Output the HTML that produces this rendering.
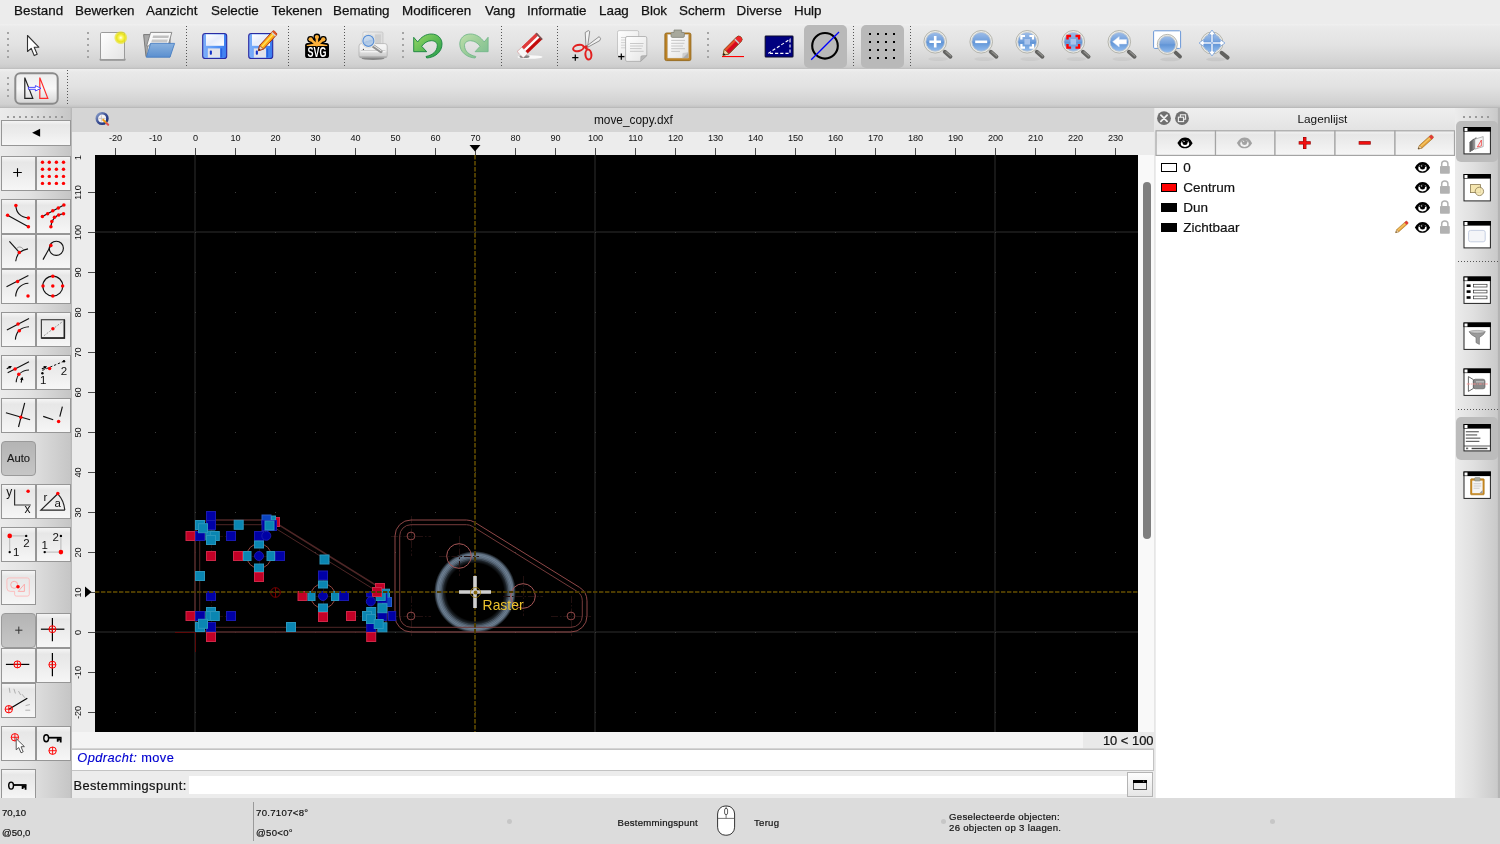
<!DOCTYPE html>
<html><head><meta charset="utf-8"><title>QCAD</title>
<style>
*{box-sizing:border-box;margin:0;padding:0}
html,body{width:1500px;height:844px;overflow:hidden;background:#dcdcdc;font-family:"Liberation Sans",sans-serif;color:#111}
.abs{position:absolute}
#menubar{position:absolute;left:0;top:0;width:1500px;height:24px;background:#ececec}
#menubar span{position:absolute;top:2.7px;font-size:13.4px;line-height:16px;color:#111;white-space:nowrap;-webkit-text-stroke:0.25px #111}
#tb1{position:absolute;left:0;top:24px;width:1500px;height:45px;background:linear-gradient(#f0f0f0 0%,#eaeaea 6%,#e3e3e3 45%,#d2d2d2 88%,#cbcbcb 96%,#bcbcbc 100%)}
#tb2{position:absolute;left:0;top:69px;width:1500px;height:39px;background:linear-gradient(#f0f0f0 0%,#e9e9e9 8%,#e2e2e2 45%,#d0d0d0 90%,#c6c6c6 96%,#b4b4b4 100%)}
.vdots{position:absolute;width:2px;background:repeating-linear-gradient(#a4a4a4 0 2px,transparent 2px 6px)}
.vsep{position:absolute;width:1px;background:repeating-linear-gradient(#555 0 1px,transparent 1px 3px)}
.hsep{position:absolute;height:1px;background:repeating-linear-gradient(90deg,#555 0 1px,transparent 1px 3px)}
.hdots{position:absolute;height:2px;background:repeating-linear-gradient(90deg,#9a9a9a 0 2px,transparent 2px 6px)}
.pressed{position:absolute;background:#b9b9b9;border-radius:5px}
#left{position:absolute;left:0;top:108px;width:72px;height:690px;background:linear-gradient(90deg,#ebebeb 0%,#e2e2e2 40%,#c6c6c6 97%,#b4b4b4 100%)}
.lb{position:absolute;width:35px;height:35px;border:1px solid #969696;background:linear-gradient(#f5f5f5 0%,#e7e7e7 16%,#ececec 50%,#f6f6f6 100%)}
.lb svg{position:absolute;left:0;top:0}
.lbp{position:absolute;width:35px;height:35px;border:1px solid #9a9a9a;border-radius:4px;background:linear-gradient(#b4b4b4,#c6c6c6)}
#mdi{position:absolute;left:72px;top:108px;width:1082px;height:690px;background:#ececec}
#mditab{position:absolute;left:0;top:0;width:1082px;height:24px;background:#d5d5d5;z-index:2}
#canvas{position:absolute;left:23px;top:47px;width:1043px;height:577px;background:#000;overflow:hidden}
.rl{position:absolute;font-size:9.4px;line-height:10px;color:#111;white-space:nowrap}
#status{position:absolute;left:0;top:798px;width:1500px;height:46px;background:#dcdcdc;font-size:9.6px;color:#111}
#status span{position:absolute;white-space:nowrap;line-height:11px;-webkit-text-stroke:0.18px #111}
#dock{position:absolute;left:1154px;top:108px;width:301px;height:690px;background:#ececec}
#right{position:absolute;left:1455px;top:108px;width:45px;height:690px;background:linear-gradient(90deg,#ececec 0%,#e0e0e0 40%,#cacaca 93%,#b8b8b8 100%)}

#root{position:absolute;left:0;top:0;width:1500px;height:844px;will-change:transform}

</style></head>
<body>
<div id="root">
<!-- menubar.html -->
<div id="menubar">
<span style="left:14px">Bestand</span>
<span style="left:75px">Bewerken</span>
<span style="left:146px">Aanzicht</span>
<span style="left:211px">Selectie</span>
<span style="left:271.5px">Tekenen</span>
<span style="left:333px">Bemating</span>
<span style="left:402px">Modificeren</span>
<span style="left:485px">Vang</span>
<span style="left:527px">Informatie</span>
<span style="left:599px">Laag</span>
<span style="left:641px">Blok</span>
<span style="left:679px">Scherm</span>
<span style="left:736.5px">Diverse</span>
<span style="left:794px">Hulp</span>
</div>

<!-- toolbar.html -->
<div id="tb1"></div>
<div id="tb2"></div>
<!-- handles and separators -->
<div class="vdots" style="left:7px;top:32px;height:26px"></div>
<div class="vdots" style="left:87px;top:32px;height:26px"></div>
<div class="vdots" style="left:402px;top:32px;height:26px"></div>
<div class="vdots" style="left:707px;top:32px;height:26px"></div>
<div class="vdots" style="left:7px;top:77px;height:20px"></div>
<div class="vsep" style="left:186px;top:26px;height:40px"></div>
<div class="vsep" style="left:288px;top:26px;height:40px"></div>
<div class="vsep" style="left:344px;top:26px;height:40px"></div>
<div class="vsep" style="left:501px;top:26px;height:40px"></div>
<div class="vsep" style="left:557px;top:26px;height:40px"></div>
<div class="vsep" style="left:853px;top:26px;height:40px"></div>
<div class="vsep" style="left:910px;top:26px;height:40px"></div>
<div class="vsep" style="left:67px;top:70px;height:36px"></div>
<div class="pressed" style="left:804px;top:25px;width:43px;height:43px"></div>
<div class="pressed" style="left:861px;top:25px;width:43px;height:43px"></div>
<svg class="abs" style="left:0;top:24px" width="1500" height="84" viewBox="0 24 1500 84">
<defs>
<linearGradient id="gPaper" x1="0" y1="0" x2="1" y2="1"><stop offset="0" stop-color="#ffffff"/><stop offset="1" stop-color="#e4e4e4"/></linearGradient>
<radialGradient id="gGlow"><stop offset="0" stop-color="#ffffff"/><stop offset="0.25" stop-color="#fdf86a"/><stop offset="0.6" stop-color="#e9e31c"/><stop offset="0.85" stop-color="#e9e31c" stop-opacity="0.6"/><stop offset="1" stop-color="#e9e31c" stop-opacity="0"/></radialGradient>
<linearGradient id="gFolder" x1="0" y1="0" x2="0" y2="1"><stop offset="0" stop-color="#8ab2df"/><stop offset="1" stop-color="#5a8fcf"/></linearGradient>
<linearGradient id="gFloppy" x1="0" y1="0" x2="1" y2="0"><stop offset="0" stop-color="#7fb0fa"/><stop offset="0.5" stop-color="#5a98f6"/><stop offset="1" stop-color="#3a7cf0"/></linearGradient>
<linearGradient id="gLabel" x1="0" y1="0" x2="1" y2="1"><stop offset="0" stop-color="#ffffff"/><stop offset="0.5" stop-color="#e6ecfb"/><stop offset="1" stop-color="#ffffff"/></linearGradient>
<linearGradient id="gUndo" x1="0" y1="0" x2="1" y2="1"><stop offset="0" stop-color="#9ad866"/><stop offset="0.5" stop-color="#5dbb55"/><stop offset="1" stop-color="#249a4c"/></linearGradient>
<linearGradient id="gRedo" x1="1" y1="0" x2="0" y2="1"><stop offset="0" stop-color="#bfe0ac"/><stop offset="0.5" stop-color="#9acc98"/><stop offset="1" stop-color="#78bc90"/></linearGradient>
<linearGradient id="gLens" x1="0" y1="0" x2="0" y2="1"><stop offset="0" stop-color="#9dbde8"/><stop offset="0.48" stop-color="#6f9edb"/><stop offset="0.52" stop-color="#6094d6"/><stop offset="1" stop-color="#92bcee"/></linearGradient>
<linearGradient id="gPrinter" x1="0" y1="0" x2="0" y2="1"><stop offset="0" stop-color="#f8f8f8"/><stop offset="0.55" stop-color="#ededed"/><stop offset="0.6" stop-color="#e0e0e0"/><stop offset="1" stop-color="#c6c6c6"/></linearGradient>
<linearGradient id="gTB" x1="0" y1="0" x2="0" y2="1"><stop offset="0" stop-color="#ececec"/><stop offset="0.5" stop-color="#f8f8f8"/><stop offset="1" stop-color="#d4d4d4"/></linearGradient>
<linearGradient id="gPP" x1="0" y1="0" x2="1" y2="0"><stop offset="0" stop-color="#f2f2f2"/><stop offset="1" stop-color="#dcdcdc"/></linearGradient>
<linearGradient id="gPL" x1="0" y1="0" x2="0.3" y2="1"><stop offset="0" stop-color="#d6e4f2"/><stop offset="0.55" stop-color="#bfd3ea"/><stop offset="0.6" stop-color="#a9c4e4"/><stop offset="1" stop-color="#b9d0ea"/></linearGradient>
<g id="mag">
  <ellipse cx="3" cy="17.2" rx="10" ry="2" fill="#000" opacity="0.045"/>
  <line x1="9.6" y1="10" x2="15.2" y2="14.9" stroke="#626260" stroke-width="4" stroke-linecap="round"/>
  <line x1="10.6" y1="10" x2="15.6" y2="14.2" stroke="#8e8e8a" stroke-width="1.2" stroke-linecap="round"/>
  <circle cx="0" cy="0" r="11.3" fill="#ecece6" stroke="#aeaea6" stroke-width="0.9"/>
  <circle cx="0" cy="0" r="9.4" fill="url(#gLens)" stroke="#b9c3cf" stroke-width="0.8"/>
</g>
</defs>
<!-- pointer -->
<path d="M27.5,35.5 L27.5,51.5 L31.2,48.3 L34.2,55.6 L37.2,54.3 L34.2,47.2 L38.8,47.2 Z" fill="#fff" stroke="#333" stroke-width="1.1" stroke-linejoin="round"/>
<!-- new -->
<rect x="99.6" y="58.3" width="26" height="2.4" rx="1.2" fill="#000" opacity="0.32"/>
<rect x="100.5" y="32.5" width="24" height="27" rx="1.3" fill="url(#gPaper)" stroke="#9b9b9b" stroke-width="1"/>
<circle cx="120.8" cy="37.7" r="6.9" fill="url(#gGlow)"/>
<!-- open -->
<path d="M143.6,34.6 H151.5 L153,36.5 H170 V56.6 H146 Z" fill="#a9a9a9" stroke="#707070" stroke-width="0.9"/>
<path d="M150.6,32.4 H171.8 L168,46 H146.6 Z" fill="#f8f8f8" stroke="#808080" stroke-width="0.9"/>
<path d="M153.2,35.5 H169 L168.3,38 H152.5 Z" fill="#c0c0c0"/>
<path d="M152,39.5 H167.8 L167,42.5 H151.2 Z" fill="#c8c8c8"/>
<path d="M146.8,56.2 L147.6,47 L150.6,43.6 L149.6,51 Z" fill="#e8e8e8" stroke="#707070" stroke-width="0.6"/>
<path d="M150.6,43.4 H174.6 L170,57.2 H146.4 Z" fill="url(#gFolder)" stroke="#4a80c4" stroke-width="0.9" stroke-linejoin="round"/>
<!-- save -->
<g id="floppy">
<rect x="202.7" y="33.5" width="24" height="25" rx="2.6" fill="url(#gFloppy)" stroke="#2a2aa2" stroke-width="1.1"/>
<rect x="206" y="34.4" width="18" height="11.4" fill="url(#gLabel)"/>
<rect x="207.8" y="48.4" width="12.2" height="9.2" fill="#e2e2ea"/>
<rect x="209.8" y="50.6" width="2.1" height="4.2" rx="0.8" fill="#1432c8"/>
<rect x="220.6" y="48.4" width="1.6" height="9" fill="#2a62e0"/>
</g>
<use href="#floppy" x="46"/>
<!-- save-as pencil -->
<g transform="translate(258.5,50.6) rotate(-47.5)">
<path d="M0,0 L4.6,-2.7 H23.5 Q25,-2.7 25,-1.2 V1.2 Q25,2.7 23.5,2.7 H4.6 Z" fill="#ffa914" stroke="#a02c12" stroke-width="0.9" stroke-linejoin="round"/>
<path d="M4.6,-1 H22 V0.6 H4.6 Z" fill="#ffe05a"/>
<path d="M0,0 L4.6,-2.7 V2.7 Z" fill="#f2d6b0" stroke="#a02c12" stroke-width="0.7"/>
<path d="M0,0 L1.8,-1 V1 Z" fill="#222"/>
<rect x="21.6" y="-2.6" width="1.6" height="5.2" fill="#d0d0d0"/>
<path d="M23.2,-2.7 H23.6 Q25,-2.7 25,-1.2 V1.2 Q25,2.7 23.6,2.7 H23.2 Z" fill="#e0532a"/>
</g>
<!-- SVG logo -->
<g>
<rect x="305.1" y="42.9" width="23.9" height="15.1" rx="2.6" fill="#000"/>
<g stroke="#000" stroke-width="5.4" stroke-linecap="round"><line x1="316.9" y1="45" x2="316.9" y2="37"/><line x1="316.9" y1="45" x2="310.6" y2="39.3"/><line x1="316.9" y1="45" x2="323.3" y2="39.3"/></g>
<circle cx="316.9" cy="37" r="3.4" fill="#000"/><circle cx="310.6" cy="39.3" r="3.4" fill="#000"/><circle cx="323.3" cy="39.3" r="3.4" fill="#000"/>
<path d="M306.8,46.1 H327.3 V45 Q322,43.6 316.9,43.4 Q312,43.6 306.8,45 Z" fill="#fbb03b"/>
<g stroke="#fbb03b" stroke-width="2.5" stroke-linecap="round"><line x1="316.9" y1="45" x2="316.9" y2="37"/><line x1="316.9" y1="45" x2="310.6" y2="39.3"/><line x1="316.9" y1="45" x2="323.3" y2="39.3"/></g>
<circle cx="316.9" cy="37" r="2.1" fill="#fbb03b"/><circle cx="310.6" cy="39.3" r="2.1" fill="#fbb03b"/><circle cx="323.3" cy="39.3" r="2.1" fill="#fbb03b"/>
<text x="307.6" y="57.1" font-family="Liberation Sans, sans-serif" font-weight="bold" font-size="14" textLength="18.9" lengthAdjust="spacingAndGlyphs" fill="#fff">SVG</text>
</g>
<!-- print preview -->
<g>
<ellipse cx="373" cy="58.3" rx="11.5" ry="1.7" fill="#000" opacity="0.38"/>
<rect x="363" y="32" width="20" height="14" rx="1.2" fill="url(#gPP)" stroke="#c2c2c2" stroke-width="0.7"/>
<rect x="374.8" y="34.4" width="6.2" height="9.6" fill="#cfcfcf"/>
<path d="M361.4,43.6 H384.8 Q387.2,43.6 387.2,46 V55.6 Q387.2,57.6 385.2,57.6 H361 Q359,57.6 359,55.6 V46 Q359,43.6 361.4,43.6 Z" fill="url(#gPrinter)" stroke="#b0b0b0" stroke-width="0.8"/>
<rect x="360.8" y="50.3" width="24.6" height="1" fill="#c4c4c4"/>
<rect x="360.8" y="51.3" width="24.6" height="0.9" fill="#fff" opacity="0.9"/>
<rect x="359.6" y="56.4" width="27" height="1.2" rx="0.6" fill="#8e8e8e" opacity="0.7"/>
<line x1="373.2" y1="46" x2="380.9" y2="51.4" stroke="#909090" stroke-width="3.4" stroke-linecap="round"/>
<line x1="373.8" y1="45.6" x2="381" y2="50.6" stroke="#e8e8e8" stroke-width="1.1" stroke-linecap="round"/>
<circle cx="368.4" cy="40.9" r="7" fill="#f4f4f0" stroke="#cfcfca" stroke-width="0.6"/>
<circle cx="368.4" cy="40.9" r="5.5" fill="url(#gPL)" stroke="#5c90d6" stroke-width="1.2"/>
<circle cx="363.4" cy="49.4" r="0.6" fill="#444"/>
</g>
<!-- undo -->
<path id="undo" d="M413.7,37.3 L417.7,42 C421,37 426,34 431.3,34 C438,34 442,38.5 442,44 C442,52 435,57.5 426.7,58 L426,56.5 C433,55 437.3,51 437.3,45.3 C437.3,42.5 434.5,40.7 431.3,40.7 C427.5,40.7 424,43 421.7,46.3 L426.7,51.7 L413.7,51.7 Z" fill="url(#gUndo)" stroke="#178340" stroke-width="0.9" stroke-linejoin="round"/>
<g transform="translate(901.8,0) scale(-1,1)"><path d="M413.7,37.3 L417.7,42 C421,37 426,34 431.3,34 C438,34 442,38.5 442,44 C442,52 435,57.5 426.7,58 L426,56.5 C433,55 437.3,51 437.3,45.3 C437.3,42.5 434.5,40.7 431.3,40.7 C427.5,40.7 424,43 421.7,46.3 L426.7,51.7 L413.7,51.7 Z" fill="url(#gRedo)" stroke="#74b88a" stroke-width="0.9" stroke-linejoin="round"/></g>
<!-- eraser -->
<g>
<ellipse cx="530" cy="57" rx="12.5" ry="1.7" fill="#fff" opacity="0.85"/>
<ellipse cx="524.5" cy="56.6" rx="5" ry="1.5" fill="#555" opacity="0.7"/>
<g transform="translate(517.2,51.6) rotate(-44)">
<rect x="0" y="0" width="27" height="8.6" fill="#c40a0a"/>
<rect x="0" y="0" width="27" height="3" fill="#e03a3a"/>
<rect x="0" y="3" width="27" height="2.3" fill="#fdfdfd"/>
<rect x="0" y="0" width="6.3" height="8.6" fill="#f8f8f8" stroke="#ccc" stroke-width="0.4"/>
<rect x="25.6" y="0" width="1.4" height="8.6" fill="#6a5a5a"/>
</g>
</g>
<!-- scissors -->
<g>
<path d="M586,46.3 L585.2,32.5 L588.3,30.6 L589.7,31.4 L587.6,46.5 Z" fill="#f4f4f4" stroke="#777" stroke-width="0.8" stroke-linejoin="round"/>
<path d="M587.6,45.4 L599.2,36.6 L600.6,38.6 L599.8,40.6 L587.8,47.2 Z" fill="#f0f0f0" stroke="#777" stroke-width="0.8" stroke-linejoin="round"/>
<ellipse cx="578.4" cy="48" rx="5.4" ry="3" transform="rotate(-14 578.4 48)" fill="none" stroke="#e21f1f" stroke-width="2"/>
<ellipse cx="588.4" cy="54.6" rx="3" ry="5" transform="rotate(-6 588.4 54.6)" fill="none" stroke="#e21f1f" stroke-width="2"/>
<path d="M583,46.2 L586.8,45.2 L588.2,49.6 L586,50 Z" fill="#e21f1f"/>
<path d="M572.2,57.6 H578.4 M575.3,54.5 V60.7" stroke="#000" stroke-width="1.2"/>
</g>
<!-- copy -->
<g>
<rect x="617.5" y="30.6" width="21.2" height="25.4" rx="1.6" fill="url(#gPaper)" stroke="#bcbcbc" stroke-width="0.8"/>
<g stroke="#cfcfcf" stroke-width="0.9"><line x1="621" y1="37.5" x2="634" y2="37.5"/><line x1="621" y1="40" x2="634" y2="40"/><line x1="621" y1="42.6" x2="634" y2="42.6"/><line x1="621" y1="45.2" x2="634" y2="45.2"/><line x1="621" y1="47.8" x2="630" y2="47.8"/></g>
<path d="M627,36.5 H645.2 Q646.8,36.5 646.8,38 V55.6 L640.6,61.4 H627 Q625.6,61.4 625.6,60 V38 Q625.6,36.5 627,36.5 Z" fill="url(#gPaper)" stroke="#a8a8a8" stroke-width="0.8"/>
<path d="M646.8,55.6 L640.6,61.4 L640.9,56.6 Q641,55.8 642,55.8 Z" fill="#b8b8b8" stroke="#999" stroke-width="0.5"/>
<g stroke="#c4c4c4" stroke-width="0.9"><line x1="630" y1="43.5" x2="643.6" y2="43.5"/><line x1="630" y1="46" x2="643" y2="46"/><line x1="630" y1="48.6" x2="641.6" y2="48.6"/><line x1="630" y1="51.3" x2="643.6" y2="51.3"/></g>
<path d="M618.2,56.7 H624.4 M621.3,53.6 V59.8" stroke="#000" stroke-width="1.2"/>
</g>
<!-- paste -->
<g>
<rect x="664.9" y="33" width="26" height="27.6" rx="1.6" fill="#bd8326" stroke="#93671a" stroke-width="0.9"/>
<rect x="667.8" y="34.6" width="20.4" height="23.4" fill="url(#gPaper)" stroke="#d6d6d6" stroke-width="0.5"/>
<path d="M688.2,52.6 V58 H682.6 Z" fill="#aaa"/>
<path d="M682.6,58 L682.9,53.4 L688.2,52.6 Z" fill="#cfcfcf" stroke="#bbb" stroke-width="0.4"/>
<path d="M674,30 H681.6 V32.4 H683.2 Q684.4,32.4 684.4,33.6 V36 Q684.4,37.4 683.2,37.4 H672.2 Q671,37.4 671,36 V33.6 Q671,32.4 672.2,32.4 H674 Z" fill="#a7a89c" stroke="#7d7e74" stroke-width="0.7"/>
<g stroke="#c2c2c2" stroke-width="0.9"><line x1="671.2" y1="40.4" x2="685" y2="40.4"/><line x1="671.2" y1="43.3" x2="684.4" y2="43.3"/><line x1="671.2" y1="46" x2="683" y2="46"/><line x1="671.2" y1="48.7" x2="685" y2="48.7"/><line x1="671.2" y1="51.4" x2="680" y2="51.4"/></g>
</g>
<!-- pencil -->
<g>
<g transform="translate(723,55.3) rotate(-45.2)">
<path d="M0,0 L5.2,-3.2 H22.6 Q25.6,-3.2 25.6,0 Q25.6,3.2 22.6,3.2 H5.2 Z" fill="#d9081f" stroke="#6e4a12" stroke-width="0.9" stroke-linejoin="round"/>
<path d="M5.2,-3 H19 V-0.8 H5.2 Z" fill="#e8502a"/>
<path d="M0,0 L5.2,-3.2 V3.2 Z" fill="#f1d2a4" stroke="#6e4a12" stroke-width="0.6"/>
<path d="M0,0 L2.2,-1.3 V1.3 Z" fill="#111"/>
<rect x="19" y="-3" width="1.8" height="6" fill="#c9c9c9"/>
<path d="M20.8,-3 H22.6 Q25.4,-3 25.4,0 Q25.4,3 22.6,3 H20.8 Z" fill="#f0262c"/>
</g>
<rect x="722" y="56" width="22" height="1.1" fill="#ff0000"/>
</g>
<!-- blue rect -->
<rect x="765.2" y="36" width="27.8" height="21" rx="0.8" fill="#00007f" stroke="#0b0b2e" stroke-width="1.1"/>
<path d="M768.2,53.4 L790,39.2 V53.4 Z" fill="none" stroke="#fff" stroke-width="1.1" stroke-dasharray="3.2,2"/>
<!-- circle/line -->
<circle cx="825" cy="45.8" r="12.8" fill="none" stroke="#000" stroke-width="2.1"/>
<line x1="811.2" y1="59.8" x2="839" y2="32" stroke="#0000ff" stroke-width="1.3"/>
<!-- grid dots -->
<g fill="#000">
<rect x="869" y="33" width="2" height="2"/><rect x="877" y="33" width="2" height="2"/><rect x="885" y="33" width="2" height="2"/><rect x="893" y="33" width="2" height="2"/>
<rect x="869" y="41" width="2" height="2"/><rect x="877" y="41" width="2" height="2"/><rect x="885" y="41" width="2" height="2"/><rect x="893" y="41" width="2" height="2"/>
<rect x="869" y="49" width="2" height="2"/><rect x="877" y="49" width="2" height="2"/><rect x="885" y="49" width="2" height="2"/><rect x="893" y="49" width="2" height="2"/>
<rect x="869" y="57" width="2" height="2"/><rect x="877" y="57" width="2" height="2"/><rect x="885" y="57" width="2" height="2"/><rect x="893" y="57" width="2" height="2"/>
</g>
<!-- zoom icons -->
<use href="#mag" x="935.2" y="41.8"/>
<path d="M929.4,41.8 H941 M935.2,36 V47.6" stroke="#fff" stroke-width="2.6"/>
<use href="#mag" x="981.2" y="41.8"/>
<path d="M975.2,41.8 H987.2" stroke="#fff" stroke-width="2.6"/>
<use href="#mag" x="1027.2" y="41.8"/>
<rect x="1024.4" y="39" width="5.6" height="5.6" fill="#a9c4ec"/>
<path d="M1021.4,39.6 V36 H1025 M1029.4,36 H1033 V39.6 M1033,44 V47.6 H1029.4 M1025,47.6 H1021.4 V44" fill="none" stroke="#fff" stroke-width="2.2"/>
<use href="#mag" x="1073.3" y="41.8"/>
<rect x="1070.5" y="39" width="5.6" height="5.6" fill="#a9c4ec"/>
<path d="M1067.5,39.6 V36 H1071.1 M1075.5,36 H1079.1 V39.6 M1079.1,44 V47.6 H1075.5 M1071.1,47.6 H1067.5 V44" fill="none" stroke="#ff0000" stroke-width="2.4"/>
<use href="#mag" x="1119.3" y="41.8"/>
<path d="M1112.6,41.8 L1119.2,36.6 V39.6 H1126.6 V44 H1119.2 V47 Z" fill="#fff" stroke="#d4e2f6" stroke-width="0.5"/>
<!-- window zoom -->
<ellipse cx="1170" cy="59.3" rx="10" ry="2" fill="#000" opacity="0.06"/>
<rect x="1153.6" y="30.8" width="27" height="17.6" rx="1" fill="#fff" stroke="#6a98d8" stroke-width="1"/>
<line x1="1175.4" y1="52.4" x2="1180" y2="56.6" stroke="#626260" stroke-width="3.8" stroke-linecap="round"/>
<circle cx="1167.3" cy="44.4" r="10" fill="#ecece6" stroke="#aeaea6" stroke-width="0.9"/>
<circle cx="1167.3" cy="44.4" r="8.2" fill="url(#gLens)" stroke="#b9c3cf" stroke-width="0.8"/>
<!-- pan -->
<ellipse cx="1216" cy="59.3" rx="10" ry="2" fill="#000" opacity="0.06"/>
<line x1="1221.6" y1="52.8" x2="1227.6" y2="57.6" stroke="#626260" stroke-width="4" stroke-linecap="round"/>
<circle cx="1212" cy="43" r="11" fill="#ecece6" stroke="#aeaea6" stroke-width="0.9"/>
<circle cx="1212" cy="43" r="9.2" fill="url(#gLens)" stroke="#b9c3cf" stroke-width="0.8"/>
<path d="M1212,30 L1215.4,34.8 H1213 V42 H1220.2 V39.6 L1225,43 L1220.2,46.4 V44 H1213 V51.2 H1215.4 L1212,56 L1208.6,51.2 H1211 V44 H1203.8 V46.4 L1199,43 L1203.8,39.6 V42 H1211 V34.8 H1208.6 Z" fill="#fff" stroke="#6a98d8" stroke-width="0.7"/>
<rect x="1211" y="42" width="2" height="2" fill="#9fbde8"/>
<!-- toolbar 2 button -->
<rect x="15.3" y="73.2" width="42.4" height="30.6" rx="5" fill="url(#gTB)" stroke="#8b8b8b" stroke-width="2"/>
<path d="M24.8,77.6 V98.3 H32.8 Z" fill="none" stroke="#222" stroke-width="1.2" stroke-linejoin="miter"/>
<path d="M39.8,77.6 V98.3 H47.8 Z" fill="none" stroke="#ff2a2a" stroke-width="1.2"/>
<path d="M28.4,87.4 H35.4 V85.6 L41,88.3 L35.4,91 V89.3 H28.4 Z" fill="#fff" stroke="#3838ff" stroke-width="0.9" stroke-linejoin="round"/>
</svg>

<!-- lefttools.html -->
<div id="left">
<div class="hdots" style="left:7px;top:8px;width:56px"></div>
<div class="lb" style="left:1px;top:12px;width:70px;height:26px"><svg width="70" height="26" style="left:-1px;top:-1px"><path d="M31.1,12.8 L39.1,8.8 V16.8 Z" fill="#000"/></svg></div>
<div class="lb" style="left:1px;top:48px"><svg width="35" height="35" style="left:-1px;top:-1px"><path d="M12.2,16.5 H20.8 M16.5,12.2 V20.8" stroke="#000" stroke-width="1.1"/></svg></div>
<div class="lb" style="left:36px;top:48px"><svg width="35" height="35" style="left:-1px;top:-1px"><circle cx="6.5" cy="6.2" r="1.7" fill="#ff0000"/><circle cx="6.5" cy="13.3" r="1.7" fill="#ff0000"/><circle cx="6.5" cy="20.4" r="1.7" fill="#ff0000"/><circle cx="6.5" cy="27.4" r="1.7" fill="#ff0000"/><circle cx="13.3" cy="6.2" r="1.7" fill="#ff0000"/><circle cx="13.3" cy="13.3" r="1.7" fill="#ff0000"/><circle cx="13.3" cy="20.4" r="1.7" fill="#ff0000"/><circle cx="13.3" cy="27.4" r="1.7" fill="#ff0000"/><circle cx="20.4" cy="6.2" r="1.7" fill="#ff0000"/><circle cx="20.4" cy="13.3" r="1.7" fill="#ff0000"/><circle cx="20.4" cy="20.4" r="1.7" fill="#ff0000"/><circle cx="20.4" cy="27.4" r="1.7" fill="#ff0000"/><circle cx="27.5" cy="6.2" r="1.7" fill="#ff0000"/><circle cx="27.5" cy="13.3" r="1.7" fill="#ff0000"/><circle cx="27.5" cy="20.4" r="1.7" fill="#ff0000"/><circle cx="27.5" cy="27.4" r="1.7" fill="#ff0000"/></svg></div>
<div class="lb" style="left:1px;top:91px"><svg width="35" height="35" viewBox="0 0 35 35" style="left:-1px;top:-1px"><path d="M14.9,6.5 C15,13.5 19.5,18.6 27.4,18.9" fill="none" stroke="#111" stroke-width="1.15" /><line x1="6.6" y1="16.3" x2="27.4" y2="27.7" stroke="#111" stroke-width="1.15"/><circle cx="14.9" cy="6.5" r="1.75" fill="#ff0000"/><circle cx="27.4" cy="18.9" r="1.75" fill="#ff0000"/><circle cx="6.6" cy="16.3" r="1.75" fill="#ff0000"/><circle cx="27.4" cy="27.7" r="1.75" fill="#ff0000"/></svg></div>
<div class="lb" style="left:36px;top:91px"><svg width="35" height="35" viewBox="0 0 35 35" style="left:-1px;top:-1px"><line x1="6.4" y1="17.6" x2="27.9" y2="6.1" stroke="#111" stroke-width="1.15"/><path d="M14.9,27.7 C15.5,20.5 19.5,15.6 27.5,14.7" fill="none" stroke="#111" stroke-width="1.15" /><circle cx="6.4" cy="17.6" r="1.75" fill="#ff0000"/><circle cx="11.6" cy="14.7" r="1.75" fill="#ff0000"/><circle cx="16.8" cy="11.7" r="1.75" fill="#ff0000"/><circle cx="22.3" cy="9.1" r="1.75" fill="#ff0000"/><circle cx="27.9" cy="6.1" r="1.75" fill="#ff0000"/><circle cx="14.9" cy="27.7" r="1.75" fill="#ff0000"/><circle cx="15.8" cy="22.5" r="1.75" fill="#ff0000"/><circle cx="18.5" cy="18.2" r="1.75" fill="#ff0000"/><circle cx="22.7" cy="15.9" r="1.75" fill="#ff0000"/><circle cx="27.5" cy="14.7" r="1.75" fill="#ff0000"/></svg></div>
<div class="lb" style="left:1px;top:126px"><svg width="35" height="35" viewBox="0 0 35 35" style="left:-1px;top:-1px"><line x1="8.4" y1="7.3" x2="18.3" y2="18.4" stroke="#111" stroke-width="1.15"/><path d="M18.3,18.4 Q22.5,15.6 27,14.9" fill="none" stroke="#111" stroke-width="1.15" /><path d="M18.3,18.4 Q15.3,22.5 14.7,27.2" fill="none" stroke="#111" stroke-width="1.15" /><path d="M15.6,14.6 Q18.8,11 22.4,15.2" fill="none" stroke="#666" stroke-width="0.6" /><circle cx="18.3" cy="18.4" r="1.75" fill="#ff0000"/></svg></div>
<div class="lb" style="left:36px;top:126px"><svg width="35" height="35" viewBox="0 0 35 35" style="left:-1px;top:-1px"><circle cx="20.3" cy="14.3" r="7.1" fill="none" stroke="#111" stroke-width="1.15"/><line x1="14.9" y1="11.5" x2="7" y2="25.6" stroke="#111" stroke-width="1.15"/><circle cx="14.9" cy="11.5" r="1.75" fill="#ff0000"/></svg></div>
<div class="lb" style="left:1px;top:161px"><svg width="35" height="35" viewBox="0 0 35 35" style="left:-1px;top:-1px"><line x1="5.5" y1="17.7" x2="27.4" y2="6.5" stroke="#111" stroke-width="1.15"/><path d="M14.7,27.4 C15,20 20,14.6 27.4,14.3" fill="none" stroke="#111" stroke-width="1.15" /><circle cx="16.6" cy="12.4" r="1.75" fill="#ff0000"/><circle cx="27" cy="27.1" r="1.75" fill="#ff0000"/></svg></div>
<div class="lb" style="left:36px;top:161px"><svg width="35" height="35" viewBox="0 0 35 35" style="left:-1px;top:-1px"><circle cx="16.8" cy="17.1" r="10" fill="none" stroke="#111" stroke-width="1.15"/><circle cx="16.8" cy="17.1" r="1.75" fill="#ff0000"/><circle cx="16.8" cy="7.2" r="1.75" fill="#ff0000"/><circle cx="16.8" cy="26.9" r="1.75" fill="#ff0000"/><circle cx="7" cy="17.1" r="1.75" fill="#ff0000"/><circle cx="26.6" cy="17.1" r="1.75" fill="#ff0000"/></svg></div>
<div class="lb" style="left:1px;top:204px"><svg width="35" height="35" viewBox="0 0 35 35" style="left:-1px;top:-1px"><line x1="5.9" y1="17.9" x2="28" y2="6.5" stroke="#111" stroke-width="1.15"/><path d="M14.4,27.6 C15,20 20,15.3 28,14.8" fill="none" stroke="#111" stroke-width="1.15" /><circle cx="17" cy="11.9" r="1.75" fill="#ff0000"/><circle cx="18.3" cy="18.7" r="1.75" fill="#ff0000"/></svg></div>
<div class="lb" style="left:36px;top:204px"><svg width="35" height="35" viewBox="0 0 35 35" style="left:-1px;top:-1px"><rect x="5.4" y="7.7" width="23" height="18.4" fill="none" stroke="#444" stroke-width="1.2"/><path d="M5.4,26.1 H28.4 V7.7" fill="none" stroke="#222" stroke-width="1.5"/><line x1="7.9" y1="23.8" x2="27.2" y2="9.1" stroke="#555" stroke-width="0.6" stroke-dasharray="2,1.4"/><circle cx="16.9" cy="16.8" r="1.75" fill="#ff0000"/></svg></div>
<div class="lb" style="left:1px;top:247px"><svg width="35" height="35" viewBox="0 0 35 35" style="left:-1px;top:-1px"><line x1="6.7" y1="17.8" x2="28" y2="6.7" stroke="#111" stroke-width="1.15"/><path d="M15.2,27.3 C15.6,20 20.5,15.4 28,15" fill="none" stroke="#111" stroke-width="1.15" /><circle cx="14.1" cy="13.9" r="1.75" fill="#ff0000"/><circle cx="17.8" cy="19.3" r="1.75" fill="#ff0000"/><g transform="translate(8.6,12.2) rotate(-28)"><path d="M-3.2,0 H0.4" stroke="#000" stroke-width="1.1"/><path d="M2.6,0 L-0.6,-1.8 V1.8 Z" fill="#000"/></g><g transform="translate(20.8,24.4) rotate(-78)"><path d="M-3.2,0 H0.4" stroke="#000" stroke-width="1.1"/><path d="M2.6,0 L-0.6,-1.8 V1.8 Z" fill="#000"/></g></svg></div>
<div class="lb" style="left:36px;top:247px"><svg width="35" height="35" viewBox="0 0 35 35" style="left:-1px;top:-1px"><line x1="6.4" y1="15.4" x2="28" y2="6.2" stroke="#111" stroke-width="1" stroke-dasharray="2.4,1.8"/><circle cx="28" cy="6.2" r="1.2" fill="#000"/><circle cx="6.4" cy="18.3" r="1.2" fill="#000"/><circle cx="13.6" cy="13.6" r="1.75" fill="#ff0000"/><g transform="translate(8.7,12.4) rotate(-28)"><path d="M-3.2,0 H0.4" stroke="#000" stroke-width="1.1"/><path d="M2.6,0 L-0.6,-1.8 V1.8 Z" fill="#000"/></g><text x="28" y="20.4" font-size="11.5" text-anchor="middle" fill="#111" font-family="Liberation Sans, sans-serif">2</text><text x="7.2" y="29.4" font-size="11.5" text-anchor="middle" fill="#111" font-family="Liberation Sans, sans-serif">1</text></svg></div>
<div class="lb" style="left:1px;top:290px"><svg width="35" height="35" viewBox="0 0 35 35" style="left:-1px;top:-1px"><line x1="4.9" y1="14.8" x2="29.1" y2="21.8" stroke="#111" stroke-width="1.15"/><line x1="23.7" y1="4.8" x2="17.5" y2="29" stroke="#111" stroke-width="1.15"/><circle cx="19.8" cy="19.2" r="1.75" fill="#ff0000"/></svg></div>
<div class="lb" style="left:36px;top:290px"><svg width="35" height="35" viewBox="0 0 35 35" style="left:-1px;top:-1px"><line x1="7.2" y1="18.4" x2="17.2" y2="21.8" stroke="#111" stroke-width="1.15"/><line x1="26.4" y1="8.7" x2="23.8" y2="18.7" stroke="#111" stroke-width="1.15"/><circle cx="22.6" cy="23.6" r="1.75" fill="#ff0000"/></svg></div>
<div class="lb" style="left:1px;top:376px"><svg width="35" height="35" viewBox="0 0 35 35" style="left:-1px;top:-1px"><text x="8.3" y="11.6" font-size="12" text-anchor="middle" fill="#111" font-family="Liberation Sans, sans-serif">y</text><path d="M13.6,5.6 V21 H29.8" fill="none" stroke="#333" stroke-width="1.2" /><text x="26.4" y="29.2" font-size="12" text-anchor="middle" fill="#111" font-family="Liberation Sans, sans-serif">x</text><circle cx="27.1" cy="7.2" r="1.75" fill="#ff0000"/></svg></div>
<div class="lb" style="left:36px;top:376px"><svg width="35" height="35" viewBox="0 0 35 35" style="left:-1px;top:-1px"><path d="M21.8,9.8 L4.9,26.1 H28.8" fill="none" stroke="#222" stroke-width="1.2" /><path d="M21.8,9.8 Q28,16.5 28.8,26.1" fill="none" stroke="#222" stroke-width="1.2" /><text x="9.5" y="16.6" font-size="11.5" text-anchor="middle" fill="#111" font-family="Liberation Sans, sans-serif">r</text><text x="21.8" y="23.4" font-size="11.5" text-anchor="middle" fill="#111" font-family="Liberation Sans, sans-serif">a</text><circle cx="21.8" cy="9.5" r="1.75" fill="#ff0000"/></svg></div>
<div class="lb" style="left:1px;top:419px"><svg width="35" height="35" viewBox="0 0 35 35" style="left:-1px;top:-1px"><path d="M8.7,25.1 V8.9 H25.2" fill="none" stroke="#aaa" stroke-width="0.8" /><circle cx="8.7" cy="8.9" r="2.3" fill="#ff0000"/><circle cx="25.2" cy="8.9" r="1.2" fill="#000"/><circle cx="8.7" cy="25.1" r="1.2" fill="#000"/><text x="25.5" y="19.8" font-size="11.5" text-anchor="middle" fill="#111" font-family="Liberation Sans, sans-serif">2</text><text x="15.2" y="28.8" font-size="11.5" text-anchor="middle" fill="#111" font-family="Liberation Sans, sans-serif">1</text></svg></div>
<div class="lb" style="left:36px;top:419px"><svg width="35" height="35" viewBox="0 0 35 35" style="left:-1px;top:-1px"><path d="M8.7,25.1 H24.9 V8.9" fill="none" stroke="#aaa" stroke-width="0.8" /><circle cx="24.9" cy="25.1" r="2.3" fill="#ff0000"/><circle cx="24.9" cy="8.9" r="1.2" fill="#000"/><circle cx="8.7" cy="25.1" r="1.2" fill="#000"/><text x="19.8" y="14.4" font-size="11.5" text-anchor="middle" fill="#111" font-family="Liberation Sans, sans-serif">2</text><text x="8.7" y="22.2" font-size="11.5" text-anchor="middle" fill="#111" font-family="Liberation Sans, sans-serif">1</text></svg></div>
<div class="lb" style="left:1px;top:462px"><svg width="35" height="35" viewBox="0 0 35 35" style="left:-1px;top:-1px"><path d="M8.2,7.9 H26.4 Q28.3,7.9 28.3,9.8 V24.2 Q28.3,26.1 26.4,26.1 H15.4 Q13.6,26.1 13.6,24.4 V21.4 H9.4 Q5.9,21.4 5.9,18 V10.2 Q5.9,7.9 8.2,7.9 Z" fill="none" stroke="#ffb4b4" stroke-width="0.8" /><circle cx="13.2" cy="14.8" r="3.5" fill="none" stroke="#ff9c9c" stroke-width="0.8"/><path d="M23.4,14.2 V21.4 H17.2 Z" fill="none" stroke="#ff9c9c" stroke-width="0.8" /><circle cx="17" cy="16.8" r="1.8" fill="#ff0000"/></svg></div>
<div class="lb" style="left:36px;top:505px"><svg width="35" height="35" viewBox="0 0 35 35" style="left:-1px;top:-1px"><line x1="4.9" y1="16.2" x2="28.4" y2="16.2" stroke="#000" stroke-width="1.2"/><line x1="16.4" y1="5" x2="16.4" y2="28.2" stroke="#000" stroke-width="1.2"/><circle cx="16.4" cy="16.2" r="3.5" fill="none" stroke="#ff0000" stroke-width="1"/><path d="M12.899999999999999,16.2 H19.9 M16.4,12.7 V19.7" stroke="#ff0000" stroke-width="0.9" fill="none"/></svg></div>
<div class="lb" style="left:1px;top:540px"><svg width="35" height="35" viewBox="0 0 35 35" style="left:-1px;top:-1px"><line x1="4.9" y1="16.4" x2="28.3" y2="16.4" stroke="#000" stroke-width="1.2"/><circle cx="16.4" cy="16.4" r="3.5" fill="none" stroke="#ff0000" stroke-width="1"/><path d="M12.899999999999999,16.4 H19.9 M16.4,12.899999999999999 V19.9" stroke="#ff0000" stroke-width="0.9" fill="none"/></svg></div>
<div class="lb" style="left:36px;top:540px"><svg width="35" height="35" viewBox="0 0 35 35" style="left:-1px;top:-1px"><line x1="16.4" y1="5.1" x2="16.4" y2="28.2" stroke="#000" stroke-width="1.2"/><circle cx="16.4" cy="16.7" r="3.5" fill="none" stroke="#ff0000" stroke-width="1"/><path d="M12.899999999999999,16.7 H19.9 M16.4,13.2 V20.2" stroke="#ff0000" stroke-width="0.9" fill="none"/></svg></div>
<div class="lb" style="left:1px;top:575px"><svg width="35" height="35" viewBox="0 0 35 35" style="left:-1px;top:-1px"><line x1="8.2" y1="4.8" x2="9" y2="9.8" stroke="#a0a0a0" stroke-width="0.8"/><line x1="12.9" y1="5.8" x2="14.4" y2="10.5" stroke="#a0a0a0" stroke-width="0.8"/><line x1="17.5" y1="8.1" x2="19.6" y2="11.9" stroke="#a0a0a0" stroke-width="0.8"/><line x1="21" y1="11.2" x2="23.9" y2="14.8" stroke="#a0a0a0" stroke-width="0.8"/><line x1="24.6" y1="22.6" x2="28.9" y2="21.5" stroke="#a0a0a0" stroke-width="0.8"/><line x1="24.3" y1="27.2" x2="29.2" y2="27.2" stroke="#a0a0a0" stroke-width="0.8"/><line x1="7.8" y1="26.2" x2="26.3" y2="15.2" stroke="#000" stroke-width="1.2"/><circle cx="7.8" cy="26.2" r="3.7" fill="none" stroke="#ff0000" stroke-width="1"/><path d="M4.1,26.2 H11.5 M7.8,22.5 V29.9" stroke="#ff0000" stroke-width="0.9" fill="none"/></svg></div>
<div class="lb" style="left:1px;top:618px"><svg width="35" height="35" viewBox="0 0 35 35" style="left:-1px;top:-1px"><circle cx="13.9" cy="11.3" r="3.7" fill="none" stroke="#ff0000" stroke-width="1"/><path d="M10.2,11.3 H17.6 M13.9,7.6000000000000005 V15.0" stroke="#ff0000" stroke-width="0.9" fill="none"/><path d="M15.2,12.6 L15.2,23.8 L17.8,21.6 L20,26.8 L22.2,25.8 L20,20.8 L23.4,20.6 Z" fill="#fff" stroke="#444" stroke-width="0.9" stroke-linejoin="round"/></svg></div>
<div class="lb" style="left:36px;top:618px"><svg width="35" height="35" viewBox="0 0 35 35" style="left:-1px;top:-1px"><ellipse cx="10.2" cy="12.3" rx="2.4" ry="3.5" fill="none" stroke="#000" stroke-width="1.4"/><path d="M12.799999999999999,11.700000000000001 H25.6" stroke="#000" stroke-width="1.8" fill="none"/><path d="M20.799999999999997,12.3 H25.6 V16.5 H23.799999999999997 V14.5 H22.6 V15.700000000000001 H20.799999999999997 Z" fill="#000"/><circle cx="16.6" cy="24.7" r="3.7" fill="none" stroke="#ff0000" stroke-width="1"/><path d="M12.900000000000002,24.7 H20.3 M16.6,21.0 V28.4" stroke="#ff0000" stroke-width="0.9" fill="none"/></svg></div>
<div class="lb" style="left:1px;top:661px;height:30px;border-bottom:none"><svg width="35" height="35" viewBox="0 0 35 35" style="left:-1px;top:-1px"><ellipse cx="10.1" cy="16.6" rx="2.4" ry="3.5" fill="none" stroke="#000" stroke-width="1.4"/><path d="M12.7,16.0 H25.5" stroke="#000" stroke-width="1.8" fill="none"/><path d="M20.7,16.6 H25.5 V20.8 H23.7 V18.8 H22.5 V20.0 H20.7 Z" fill="#000"/></svg></div>
<div class="lbp" style="left:1px;top:333px"><span style="position:absolute;left:0;top:10px;width:33px;text-align:center;font-size:11.2px;line-height:12px;color:#1a1a1a;-webkit-text-stroke:0.15px #1a1a1a">Auto</span></div>
<div class="lbp" style="left:1px;top:505px"><svg width="33" height="33" style="position:absolute;left:0;top:0"><path d="M13.2,16.2 H20.4 M16.8,12.6 V19.8" stroke="#333" stroke-width="1"/></svg></div>
</div>

<!-- canvas.html -->
<div id="mdi">
<div id="mditab"><span style="position:absolute;left:522px;top:5.5px;font-size:11.85px;line-height:13px;color:#111">move_copy.dxf</span>
<svg class="abs" style="left:22px;top:3px" width="16" height="16" viewBox="0 0 16 16"><defs><linearGradient id="gQ" x1="0" y1="0" x2="1" y2="1"><stop offset="0" stop-color="#8ea2cc"/><stop offset="0.5" stop-color="#3a4e92"/><stop offset="1" stop-color="#1c2f78"/></linearGradient></defs><circle cx="8.1" cy="7.5" r="5.3" fill="#f4f4f6" stroke="url(#gQ)" stroke-width="2.6"/><path d="M4.6,7.4 H11.6 M7.4,4.4 V10.6" stroke="#c0b4b4" stroke-width="0.7"/><path d="M8.6,8.2 L13,12.6" stroke="#f0a018" stroke-width="2" stroke-linecap="butt"/><path d="M12.6,12.2 L14.2,13.8" stroke="#e05050" stroke-width="2" stroke-linecap="round"/></svg>
</div>
<svg class="abs" style="left:0;top:23px" width="1082" height="610" viewBox="72 131 1082 610" font-family="Liberation Sans, sans-serif" font-size="9.15" fill="#111">
<rect x="115" y="148" width="1" height="7" fill="#4a4a4a"/>
<text x="115.5" y="141" text-anchor="middle">-20</text>
<rect x="155" y="148" width="1" height="7" fill="#4a4a4a"/>
<text x="155.5" y="141" text-anchor="middle">-10</text>
<rect x="195" y="148" width="1" height="7" fill="#4a4a4a"/>
<text x="195.5" y="141" text-anchor="middle">0</text>
<rect x="235" y="148" width="1" height="7" fill="#4a4a4a"/>
<text x="235.5" y="141" text-anchor="middle">10</text>
<rect x="275" y="148" width="1" height="7" fill="#4a4a4a"/>
<text x="275.5" y="141" text-anchor="middle">20</text>
<rect x="315" y="148" width="1" height="7" fill="#4a4a4a"/>
<text x="315.5" y="141" text-anchor="middle">30</text>
<rect x="355" y="148" width="1" height="7" fill="#4a4a4a"/>
<text x="355.5" y="141" text-anchor="middle">40</text>
<rect x="395" y="148" width="1" height="7" fill="#4a4a4a"/>
<text x="395.5" y="141" text-anchor="middle">50</text>
<rect x="435" y="148" width="1" height="7" fill="#4a4a4a"/>
<text x="435.5" y="141" text-anchor="middle">60</text>
<rect x="475" y="148" width="1" height="7" fill="#4a4a4a"/>
<text x="475.5" y="141" text-anchor="middle">70</text>
<rect x="515" y="148" width="1" height="7" fill="#4a4a4a"/>
<text x="515.5" y="141" text-anchor="middle">80</text>
<rect x="555" y="148" width="1" height="7" fill="#4a4a4a"/>
<text x="555.5" y="141" text-anchor="middle">90</text>
<rect x="595" y="148" width="1" height="7" fill="#4a4a4a"/>
<text x="595.5" y="141" text-anchor="middle">100</text>
<rect x="635" y="148" width="1" height="7" fill="#4a4a4a"/>
<text x="635.5" y="141" text-anchor="middle">110</text>
<rect x="675" y="148" width="1" height="7" fill="#4a4a4a"/>
<text x="675.5" y="141" text-anchor="middle">120</text>
<rect x="715" y="148" width="1" height="7" fill="#4a4a4a"/>
<text x="715.5" y="141" text-anchor="middle">130</text>
<rect x="755" y="148" width="1" height="7" fill="#4a4a4a"/>
<text x="755.5" y="141" text-anchor="middle">140</text>
<rect x="795" y="148" width="1" height="7" fill="#4a4a4a"/>
<text x="795.5" y="141" text-anchor="middle">150</text>
<rect x="835" y="148" width="1" height="7" fill="#4a4a4a"/>
<text x="835.5" y="141" text-anchor="middle">160</text>
<rect x="875" y="148" width="1" height="7" fill="#4a4a4a"/>
<text x="875.5" y="141" text-anchor="middle">170</text>
<rect x="915" y="148" width="1" height="7" fill="#4a4a4a"/>
<text x="915.5" y="141" text-anchor="middle">180</text>
<rect x="955" y="148" width="1" height="7" fill="#4a4a4a"/>
<text x="955.5" y="141" text-anchor="middle">190</text>
<rect x="995" y="148" width="1" height="7" fill="#4a4a4a"/>
<text x="995.5" y="141" text-anchor="middle">200</text>
<rect x="1035" y="148" width="1" height="7" fill="#4a4a4a"/>
<text x="1035.5" y="141" text-anchor="middle">210</text>
<rect x="1075" y="148" width="1" height="7" fill="#4a4a4a"/>
<text x="1075.5" y="141" text-anchor="middle">220</text>
<rect x="1115" y="148" width="1" height="7" fill="#4a4a4a"/>
<text x="1115.5" y="141" text-anchor="middle">230</text>
<rect x="88" y="712" width="7" height="1" fill="#4a4a4a"/>
<text transform="translate(81.2,712.5) rotate(-90)" text-anchor="middle">-20</text>
<rect x="88" y="672" width="7" height="1" fill="#4a4a4a"/>
<text transform="translate(81.2,672.5) rotate(-90)" text-anchor="middle">-10</text>
<rect x="88" y="632" width="7" height="1" fill="#4a4a4a"/>
<text transform="translate(81.2,632.5) rotate(-90)" text-anchor="middle">0</text>
<rect x="88" y="592" width="7" height="1" fill="#4a4a4a"/>
<text transform="translate(81.2,592.5) rotate(-90)" text-anchor="middle">10</text>
<rect x="88" y="552" width="7" height="1" fill="#4a4a4a"/>
<text transform="translate(81.2,552.5) rotate(-90)" text-anchor="middle">20</text>
<rect x="88" y="512" width="7" height="1" fill="#4a4a4a"/>
<text transform="translate(81.2,512.5) rotate(-90)" text-anchor="middle">30</text>
<rect x="88" y="472" width="7" height="1" fill="#4a4a4a"/>
<text transform="translate(81.2,472.5) rotate(-90)" text-anchor="middle">40</text>
<rect x="88" y="432" width="7" height="1" fill="#4a4a4a"/>
<text transform="translate(81.2,432.5) rotate(-90)" text-anchor="middle">50</text>
<rect x="88" y="392" width="7" height="1" fill="#4a4a4a"/>
<text transform="translate(81.2,392.5) rotate(-90)" text-anchor="middle">60</text>
<rect x="88" y="352" width="7" height="1" fill="#4a4a4a"/>
<text transform="translate(81.2,352.5) rotate(-90)" text-anchor="middle">70</text>
<rect x="88" y="312" width="7" height="1" fill="#4a4a4a"/>
<text transform="translate(81.2,312.5) rotate(-90)" text-anchor="middle">80</text>
<rect x="88" y="272" width="7" height="1" fill="#4a4a4a"/>
<text transform="translate(81.2,272.5) rotate(-90)" text-anchor="middle">90</text>
<rect x="88" y="232" width="7" height="1" fill="#4a4a4a"/>
<text transform="translate(81.2,232.5) rotate(-90)" text-anchor="middle">100</text>
<rect x="88" y="192" width="7" height="1" fill="#4a4a4a"/>
<text transform="translate(81.2,192.5) rotate(-90)" text-anchor="middle">110</text>
<text transform="translate(81.2,152.5) rotate(-90)" text-anchor="middle">120</text>
<path d="M469.5,145 H480.5 L475,151.6 Z" fill="#000"/>
<path d="M85,586.5 V597.5 L91.6,592 Z" fill="#000"/>
</svg>
<div class="abs" style="left:0;top:24px;width:23px;height:23px;background:#ececec"></div>
<div class="abs" style="left:1066px;top:47px;width:16px;height:577px;background:#f9f9f9"></div>
<div class="abs" style="left:1071.3px;top:74.3px;width:7.6px;height:357px;border-radius:4px;background:#7f7f7f"></div>
<div class="abs" style="left:0;top:624px;width:1082px;height:16px;background:#f4f4f4"></div>
<div class="abs" style="left:1011px;top:624px;width:71px;height:16px;background:#e9e9e9"></div>
<span class="abs" style="right:0.5px;top:625.8px;font-size:12.9px;line-height:14px;color:#111;white-space:nowrap;-webkit-text-stroke:0.2px #111">10 &lt; 100</span>
<div id="canvas"><svg width="1043" height="577" viewBox="95 155 1043 577" style="position:absolute;left:0;top:0">
<defs>
<radialGradient id="ring" cx="475" cy="592" r="41" gradientUnits="userSpaceOnUse">
<stop offset="0.70" stop-color="#5a6c7e" stop-opacity="0"/>
<stop offset="0.78" stop-color="#506274" stop-opacity="0.4"/>
<stop offset="0.84" stop-color="#687d94" stop-opacity="0.72"/>
<stop offset="0.90" stop-color="#768ca3" stop-opacity="0.8"/>
<stop offset="0.945" stop-color="#6c8197" stop-opacity="0.72"/>
<stop offset="0.975" stop-color="#5a6c7e" stop-opacity="0.4"/>
<stop offset="1" stop-color="#5a6c7e" stop-opacity="0"/>
</radialGradient>
</defs>
<rect x="194" y="155" width="2" height="577" fill="#171717"/>
<rect x="594" y="155" width="2" height="577" fill="#171717"/>
<rect x="994" y="155" width="2" height="577" fill="#171717"/>
<rect x="95" y="231" width="1043" height="2" fill="#171717"/>
<rect x="95" y="631" width="1043" height="2" fill="#171717"/>
<path d="M115,712h1v1h-1zM115,672h1v1h-1zM115,632h1v1h-1zM115,592h1v1h-1zM115,552h1v1h-1zM115,512h1v1h-1zM115,472h1v1h-1zM115,432h1v1h-1zM115,392h1v1h-1zM115,352h1v1h-1zM115,312h1v1h-1zM115,272h1v1h-1zM115,232h1v1h-1zM115,192h1v1h-1zM155,712h1v1h-1zM155,672h1v1h-1zM155,632h1v1h-1zM155,592h1v1h-1zM155,552h1v1h-1zM155,512h1v1h-1zM155,472h1v1h-1zM155,432h1v1h-1zM155,392h1v1h-1zM155,352h1v1h-1zM155,312h1v1h-1zM155,272h1v1h-1zM155,232h1v1h-1zM155,192h1v1h-1zM195,712h1v1h-1zM195,672h1v1h-1zM195,632h1v1h-1zM195,592h1v1h-1zM195,552h1v1h-1zM195,512h1v1h-1zM195,472h1v1h-1zM195,432h1v1h-1zM195,392h1v1h-1zM195,352h1v1h-1zM195,312h1v1h-1zM195,272h1v1h-1zM195,232h1v1h-1zM195,192h1v1h-1zM235,712h1v1h-1zM235,672h1v1h-1zM235,632h1v1h-1zM235,592h1v1h-1zM235,552h1v1h-1zM235,512h1v1h-1zM235,472h1v1h-1zM235,432h1v1h-1zM235,392h1v1h-1zM235,352h1v1h-1zM235,312h1v1h-1zM235,272h1v1h-1zM235,232h1v1h-1zM235,192h1v1h-1zM275,712h1v1h-1zM275,672h1v1h-1zM275,632h1v1h-1zM275,592h1v1h-1zM275,552h1v1h-1zM275,512h1v1h-1zM275,472h1v1h-1zM275,432h1v1h-1zM275,392h1v1h-1zM275,352h1v1h-1zM275,312h1v1h-1zM275,272h1v1h-1zM275,232h1v1h-1zM275,192h1v1h-1zM315,712h1v1h-1zM315,672h1v1h-1zM315,632h1v1h-1zM315,592h1v1h-1zM315,552h1v1h-1zM315,512h1v1h-1zM315,472h1v1h-1zM315,432h1v1h-1zM315,392h1v1h-1zM315,352h1v1h-1zM315,312h1v1h-1zM315,272h1v1h-1zM315,232h1v1h-1zM315,192h1v1h-1zM355,712h1v1h-1zM355,672h1v1h-1zM355,632h1v1h-1zM355,592h1v1h-1zM355,552h1v1h-1zM355,512h1v1h-1zM355,472h1v1h-1zM355,432h1v1h-1zM355,392h1v1h-1zM355,352h1v1h-1zM355,312h1v1h-1zM355,272h1v1h-1zM355,232h1v1h-1zM355,192h1v1h-1zM395,712h1v1h-1zM395,672h1v1h-1zM395,632h1v1h-1zM395,592h1v1h-1zM395,552h1v1h-1zM395,512h1v1h-1zM395,472h1v1h-1zM395,432h1v1h-1zM395,392h1v1h-1zM395,352h1v1h-1zM395,312h1v1h-1zM395,272h1v1h-1zM395,232h1v1h-1zM395,192h1v1h-1zM435,712h1v1h-1zM435,672h1v1h-1zM435,632h1v1h-1zM435,592h1v1h-1zM435,552h1v1h-1zM435,512h1v1h-1zM435,472h1v1h-1zM435,432h1v1h-1zM435,392h1v1h-1zM435,352h1v1h-1zM435,312h1v1h-1zM435,272h1v1h-1zM435,232h1v1h-1zM435,192h1v1h-1zM475,712h1v1h-1zM475,672h1v1h-1zM475,632h1v1h-1zM475,592h1v1h-1zM475,552h1v1h-1zM475,512h1v1h-1zM475,472h1v1h-1zM475,432h1v1h-1zM475,392h1v1h-1zM475,352h1v1h-1zM475,312h1v1h-1zM475,272h1v1h-1zM475,232h1v1h-1zM475,192h1v1h-1zM515,712h1v1h-1zM515,672h1v1h-1zM515,632h1v1h-1zM515,592h1v1h-1zM515,552h1v1h-1zM515,512h1v1h-1zM515,472h1v1h-1zM515,432h1v1h-1zM515,392h1v1h-1zM515,352h1v1h-1zM515,312h1v1h-1zM515,272h1v1h-1zM515,232h1v1h-1zM515,192h1v1h-1zM555,712h1v1h-1zM555,672h1v1h-1zM555,632h1v1h-1zM555,592h1v1h-1zM555,552h1v1h-1zM555,512h1v1h-1zM555,472h1v1h-1zM555,432h1v1h-1zM555,392h1v1h-1zM555,352h1v1h-1zM555,312h1v1h-1zM555,272h1v1h-1zM555,232h1v1h-1zM555,192h1v1h-1zM595,712h1v1h-1zM595,672h1v1h-1zM595,632h1v1h-1zM595,592h1v1h-1zM595,552h1v1h-1zM595,512h1v1h-1zM595,472h1v1h-1zM595,432h1v1h-1zM595,392h1v1h-1zM595,352h1v1h-1zM595,312h1v1h-1zM595,272h1v1h-1zM595,232h1v1h-1zM595,192h1v1h-1zM635,712h1v1h-1zM635,672h1v1h-1zM635,632h1v1h-1zM635,592h1v1h-1zM635,552h1v1h-1zM635,512h1v1h-1zM635,472h1v1h-1zM635,432h1v1h-1zM635,392h1v1h-1zM635,352h1v1h-1zM635,312h1v1h-1zM635,272h1v1h-1zM635,232h1v1h-1zM635,192h1v1h-1zM675,712h1v1h-1zM675,672h1v1h-1zM675,632h1v1h-1zM675,592h1v1h-1zM675,552h1v1h-1zM675,512h1v1h-1zM675,472h1v1h-1zM675,432h1v1h-1zM675,392h1v1h-1zM675,352h1v1h-1zM675,312h1v1h-1zM675,272h1v1h-1zM675,232h1v1h-1zM675,192h1v1h-1zM715,712h1v1h-1zM715,672h1v1h-1zM715,632h1v1h-1zM715,592h1v1h-1zM715,552h1v1h-1zM715,512h1v1h-1zM715,472h1v1h-1zM715,432h1v1h-1zM715,392h1v1h-1zM715,352h1v1h-1zM715,312h1v1h-1zM715,272h1v1h-1zM715,232h1v1h-1zM715,192h1v1h-1zM755,712h1v1h-1zM755,672h1v1h-1zM755,632h1v1h-1zM755,592h1v1h-1zM755,552h1v1h-1zM755,512h1v1h-1zM755,472h1v1h-1zM755,432h1v1h-1zM755,392h1v1h-1zM755,352h1v1h-1zM755,312h1v1h-1zM755,272h1v1h-1zM755,232h1v1h-1zM755,192h1v1h-1zM795,712h1v1h-1zM795,672h1v1h-1zM795,632h1v1h-1zM795,592h1v1h-1zM795,552h1v1h-1zM795,512h1v1h-1zM795,472h1v1h-1zM795,432h1v1h-1zM795,392h1v1h-1zM795,352h1v1h-1zM795,312h1v1h-1zM795,272h1v1h-1zM795,232h1v1h-1zM795,192h1v1h-1zM835,712h1v1h-1zM835,672h1v1h-1zM835,632h1v1h-1zM835,592h1v1h-1zM835,552h1v1h-1zM835,512h1v1h-1zM835,472h1v1h-1zM835,432h1v1h-1zM835,392h1v1h-1zM835,352h1v1h-1zM835,312h1v1h-1zM835,272h1v1h-1zM835,232h1v1h-1zM835,192h1v1h-1zM875,712h1v1h-1zM875,672h1v1h-1zM875,632h1v1h-1zM875,592h1v1h-1zM875,552h1v1h-1zM875,512h1v1h-1zM875,472h1v1h-1zM875,432h1v1h-1zM875,392h1v1h-1zM875,352h1v1h-1zM875,312h1v1h-1zM875,272h1v1h-1zM875,232h1v1h-1zM875,192h1v1h-1zM915,712h1v1h-1zM915,672h1v1h-1zM915,632h1v1h-1zM915,592h1v1h-1zM915,552h1v1h-1zM915,512h1v1h-1zM915,472h1v1h-1zM915,432h1v1h-1zM915,392h1v1h-1zM915,352h1v1h-1zM915,312h1v1h-1zM915,272h1v1h-1zM915,232h1v1h-1zM915,192h1v1h-1zM955,712h1v1h-1zM955,672h1v1h-1zM955,632h1v1h-1zM955,592h1v1h-1zM955,552h1v1h-1zM955,512h1v1h-1zM955,472h1v1h-1zM955,432h1v1h-1zM955,392h1v1h-1zM955,352h1v1h-1zM955,312h1v1h-1zM955,272h1v1h-1zM955,232h1v1h-1zM955,192h1v1h-1zM995,712h1v1h-1zM995,672h1v1h-1zM995,632h1v1h-1zM995,592h1v1h-1zM995,552h1v1h-1zM995,512h1v1h-1zM995,472h1v1h-1zM995,432h1v1h-1zM995,392h1v1h-1zM995,352h1v1h-1zM995,312h1v1h-1zM995,272h1v1h-1zM995,232h1v1h-1zM995,192h1v1h-1zM1035,712h1v1h-1zM1035,672h1v1h-1zM1035,632h1v1h-1zM1035,592h1v1h-1zM1035,552h1v1h-1zM1035,512h1v1h-1zM1035,472h1v1h-1zM1035,432h1v1h-1zM1035,392h1v1h-1zM1035,352h1v1h-1zM1035,312h1v1h-1zM1035,272h1v1h-1zM1035,232h1v1h-1zM1035,192h1v1h-1zM1075,712h1v1h-1zM1075,672h1v1h-1zM1075,632h1v1h-1zM1075,592h1v1h-1zM1075,552h1v1h-1zM1075,512h1v1h-1zM1075,472h1v1h-1zM1075,432h1v1h-1zM1075,392h1v1h-1zM1075,352h1v1h-1zM1075,312h1v1h-1zM1075,272h1v1h-1zM1075,232h1v1h-1zM1075,192h1v1h-1zM1115,712h1v1h-1zM1115,672h1v1h-1zM1115,632h1v1h-1zM1115,592h1v1h-1zM1115,552h1v1h-1zM1115,512h1v1h-1zM1115,472h1v1h-1zM1115,432h1v1h-1zM1115,392h1v1h-1zM1115,352h1v1h-1zM1115,312h1v1h-1zM1115,272h1v1h-1zM1115,232h1v1h-1zM1115,192h1v1h-1z" fill="#3c3c3c"/>
<path d="M175,632.5 H195.5 V652" fill="none" stroke="#5e0808" stroke-width="1"/>
<path d="M191,616.5 H231 M211.5,596 V636" fill="none" stroke="#1e0e0e" stroke-width="1" stroke-dasharray="7,2,1.5,2"/>
<path d="M191,536.5 H231 M211.5,516 V556" fill="none" stroke="#1e0e0e" stroke-width="1" stroke-dasharray="7,2,1.5,2"/>
<path d="M351,616.5 H391 M371.5,596 V636" fill="none" stroke="#1e0e0e" stroke-width="1" stroke-dasharray="7,2,1.5,2"/>
<path d="M239,556.5 H279 M259.5,536 V576" fill="none" stroke="#1e0e0e" stroke-width="1" stroke-dasharray="7,2,1.5,2"/>
<path d="M303,596.5 H343 M323.5,576 V616" fill="none" stroke="#1e0e0e" stroke-width="1" stroke-dasharray="7,2,1.5,2"/>
<path d="M195.00,616 L195.00,536 A16,16 0 0 1 211,520.00 L266.44,520.00 A16,16 0 0 1 274.88,522.41 L379.44,587.31 A16,16 0 0 1 387.00,600.9 L387.00,616 A16,16 0 0 1 371,632.00 L211,632.00 A16,16 0 0 1 195.00,616 Z" fill="none" stroke="#4e2626" stroke-width="1.6"/>
<path d="M199.70,616 L199.70,536 A11.3,11.3 0 0 1 211,524.70 L266.44,524.70 A11.3,11.3 0 0 1 272.40,526.40 L376.96,591.30 A11.3,11.3 0 0 1 382.30,600.9 L382.30,616 A11.3,11.3 0 0 1 371,627.30 L211,627.30 A11.3,11.3 0 0 1 199.70,616 Z" fill="none" stroke="#4e2626" stroke-width="1.0"/>
<circle cx="211" cy="616" r="3.9" fill="none" stroke="#4e2626" stroke-width="1.0"/>
<circle cx="211" cy="536" r="3.9" fill="none" stroke="#4e2626" stroke-width="1.0"/>
<circle cx="371" cy="616" r="3.9" fill="none" stroke="#4e2626" stroke-width="1.0"/>
<circle cx="259" cy="556" r="12.3" fill="none" stroke="#96463f" stroke-width="1"/>
<circle cx="323" cy="596" r="12.3" fill="none" stroke="#96463f" stroke-width="1"/>
<circle cx="475" cy="592" r="41" fill="url(#ring)"/>
<circle cx="475" cy="592" r="32.6" fill="none" stroke="#b4c6d8" stroke-width="0.5" opacity="0.25"/>
<circle cx="475" cy="592" r="34" fill="none" stroke="#b4c6d8" stroke-width="0.5" opacity="0.35"/>
<circle cx="475" cy="592" r="35.4" fill="none" stroke="#b4c6d8" stroke-width="0.5" opacity="0.45"/>
<circle cx="475" cy="592" r="36.8" fill="none" stroke="#b4c6d8" stroke-width="0.5" opacity="0.45"/>
<circle cx="475" cy="592" r="38.2" fill="none" stroke="#b4c6d8" stroke-width="0.5" opacity="0.35"/>
<path d="M391,616.5 H431 M411.5,596 V636" fill="none" stroke="#221010" stroke-width="1" stroke-dasharray="7,2,1.5,2"/>
<path d="M391,536.5 H431 M411.5,516 V556" fill="none" stroke="#221010" stroke-width="1" stroke-dasharray="7,2,1.5,2"/>
<path d="M551,616.5 H591 M571.5,596 V636" fill="none" stroke="#221010" stroke-width="1" stroke-dasharray="7,2,1.5,2"/>
<path d="M439,556.5 H479 M459.5,536 V576" fill="none" stroke="#221010" stroke-width="1" stroke-dasharray="7,2,1.5,2"/>
<path d="M503,596.5 H543 M523.5,576 V616" fill="none" stroke="#221010" stroke-width="1" stroke-dasharray="7,2,1.5,2"/>
<path d="M395.00,616 L395.00,536 A16,16 0 0 1 411,520.00 L466.44,520.00 A16,16 0 0 1 474.88,522.41 L579.44,587.31 A16,16 0 0 1 587.00,600.9 L587.00,616 A16,16 0 0 1 571,632.00 L411,632.00 A16,16 0 0 1 395.00,616 Z" fill="none" stroke="#904848" stroke-width="1.0"/>
<path d="M399.70,616 L399.70,536 A11.3,11.3 0 0 1 411,524.70 L466.44,524.70 A11.3,11.3 0 0 1 472.40,526.40 L576.96,591.30 A11.3,11.3 0 0 1 582.30,600.9 L582.30,616 A11.3,11.3 0 0 1 571,627.30 L411,627.30 A11.3,11.3 0 0 1 399.70,616 Z" fill="none" stroke="#743a3a" stroke-width="1.0"/>
<circle cx="411" cy="616" r="3.9" fill="none" stroke="#904848" stroke-width="1.0"/>
<circle cx="411" cy="536" r="3.9" fill="none" stroke="#904848" stroke-width="1.0"/>
<circle cx="571" cy="616" r="3.9" fill="none" stroke="#904848" stroke-width="1.0"/>
<circle cx="459" cy="556" r="12.3" fill="none" stroke="#a65656" stroke-width="1"/>
<circle cx="523" cy="596" r="12.3" fill="none" stroke="#a65656" stroke-width="1"/>
<circle cx="275.5" cy="592.5" r="4.8" fill="none" stroke="#7c0000" stroke-width="1"/><path d="M270.7,592.5 H280.3 M275.5,587.7 V597.3" stroke="#7c0000" stroke-width="1" fill="none"/>
<rect x="186.0" y="531.5" width="9.0" height="9.0" fill="#c20026" stroke="#cc2848" stroke-width="1"/>
<rect x="206.5" y="511.5" width="9.0" height="9.0" fill="#0000a6" stroke="#1a1aae" stroke-width="1"/>
<rect x="206.5" y="520.5" width="9.0" height="9.0" fill="#0000a6" stroke="#1a1aae" stroke-width="1"/>
<rect x="195.5" y="531.5" width="9.0" height="9.0" fill="#0000a6" stroke="#1a1aae" stroke-width="1"/>
<rect x="226.5" y="531.5" width="9.0" height="9.0" fill="#0000a6" stroke="#1a1aae" stroke-width="1"/>
<rect x="195.5" y="520.5" width="9.0" height="9.0" fill="#0a86b2" stroke="#2a96bc" stroke-width="1"/>
<rect x="205.8" y="531.0" width="9.0" height="9.0" fill="#0a86b2" stroke="#2a96bc" stroke-width="1"/>
<rect x="210.3" y="531.5" width="9.0" height="9.0" fill="#0a86b2" stroke="#2a96bc" stroke-width="1"/>
<rect x="206.5" y="535.5" width="9.0" height="9.0" fill="#0a86b2" stroke="#2a96bc" stroke-width="1"/>
<rect x="198.5" y="523.7" width="9.0" height="9.0" fill="#0a86b2" stroke="#2a96bc" stroke-width="1"/>
<rect x="234.2" y="520.3" width="9.0" height="9.0" fill="#0a86b2" stroke="#2a96bc" stroke-width="1"/>
<rect x="206.5" y="551.5" width="9.0" height="9.0" fill="#c20026" stroke="#cc2848" stroke-width="1"/>
<rect x="195.5" y="571.5" width="9.0" height="9.0" fill="#0a86b2" stroke="#2a96bc" stroke-width="1"/>
<rect x="270.5" y="517.5" width="9.0" height="9.0" fill="#c20026" stroke="#cc2848" stroke-width="1"/>
<rect x="262.0" y="515.0" width="9.0" height="9.0" fill="#0a44c0" stroke="#2a5cc8" stroke-width="1"/>
<rect x="271.5" y="516.0" width="4.0" height="4.0" fill="#0a86b2" stroke="#2a96bc" stroke-width="1"/>
<rect x="262.0" y="520.5" width="14.5" height="10.0" fill="#0000a6" stroke="#1a1aae" stroke-width="1"/>
<rect x="254.5" y="531.5" width="9.0" height="9.0" fill="#0000a6" stroke="#1a1aae" stroke-width="1"/>
<rect x="265.0" y="521.0" width="9.0" height="9.0" fill="#0a86b2" stroke="#2a96bc" stroke-width="1"/>
<circle cx="266.3" cy="535.8" r="4.5" fill="#0000a6" stroke="#1a1aae" stroke-width="1"/>
<rect x="233.5" y="551.5" width="9.0" height="9.0" fill="#c20026" stroke="#cc2848" stroke-width="1"/>
<rect x="243.5" y="551.5" width="7.5" height="9.0" fill="#0a86b2" stroke="#2a96bc" stroke-width="1"/>
<rect x="267.0" y="551.5" width="7.5" height="9.0" fill="#0a86b2" stroke="#2a96bc" stroke-width="1"/>
<rect x="275.5" y="551.5" width="9.0" height="9.0" fill="#0000a6" stroke="#1a1aae" stroke-width="1"/>
<rect x="254.5" y="541.0" width="9.0" height="7.0" fill="#0a86b2" stroke="#2a96bc" stroke-width="1"/>
<rect x="254.5" y="564.0" width="9.0" height="7.5" fill="#0a86b2" stroke="#2a96bc" stroke-width="1"/>
<rect x="254.5" y="572.5" width="9.0" height="9.0" fill="#c20026" stroke="#cc2848" stroke-width="1"/>
<circle cx="259" cy="556" r="4.5" fill="#0000a6" stroke="#1a1aae" stroke-width="1"/>
<rect x="206.5" y="591.5" width="9.0" height="9.0" fill="#0000a6" stroke="#1a1aae" stroke-width="1"/>
<rect x="186.0" y="611.5" width="9.0" height="9.0" fill="#c20026" stroke="#cc2848" stroke-width="1"/>
<rect x="195.5" y="611.5" width="9.0" height="9.0" fill="#0000a6" stroke="#1a1aae" stroke-width="1"/>
<rect x="226.5" y="611.5" width="9.0" height="9.0" fill="#0000a6" stroke="#1a1aae" stroke-width="1"/>
<rect x="206.5" y="622.5" width="9.0" height="9.0" fill="#0000a6" stroke="#1a1aae" stroke-width="1"/>
<rect x="206.5" y="607.5" width="9.0" height="9.0" fill="#0a86b2" stroke="#2a96bc" stroke-width="1"/>
<rect x="205.8" y="611.5" width="9.0" height="9.0" fill="#0a86b2" stroke="#2a96bc" stroke-width="1"/>
<rect x="210.3" y="611.5" width="9.0" height="9.0" fill="#0a86b2" stroke="#2a96bc" stroke-width="1"/>
<rect x="195.5" y="622.5" width="9.0" height="9.0" fill="#0a86b2" stroke="#2a96bc" stroke-width="1"/>
<rect x="198.5" y="619.3" width="9.0" height="9.0" fill="#0a86b2" stroke="#2a96bc" stroke-width="1"/>
<rect x="206.5" y="632.5" width="9.0" height="9.0" fill="#c20026" stroke="#cc2848" stroke-width="1"/>
<rect x="286.5" y="622.5" width="9.0" height="9.0" fill="#0a86b2" stroke="#2a96bc" stroke-width="1"/>
<rect x="320.0" y="555.0" width="9.0" height="9.0" fill="#0a86b2" stroke="#2a96bc" stroke-width="1"/>
<rect x="318.5" y="571.0" width="9.0" height="9.0" fill="#0000a6" stroke="#1a1aae" stroke-width="1"/>
<rect x="318.5" y="581.0" width="9.0" height="7.0" fill="#0a86b2" stroke="#2a96bc" stroke-width="1"/>
<rect x="298.0" y="591.5" width="9.0" height="9.0" fill="#c20026" stroke="#cc2848" stroke-width="1"/>
<rect x="308.0" y="591.5" width="7.0" height="9.0" fill="#0a86b2" stroke="#2a96bc" stroke-width="1"/>
<rect x="331.5" y="591.5" width="7.0" height="9.0" fill="#0a86b2" stroke="#2a96bc" stroke-width="1"/>
<rect x="339.5" y="591.5" width="9.0" height="9.0" fill="#0000a6" stroke="#1a1aae" stroke-width="1"/>
<rect x="318.5" y="604.0" width="9.0" height="7.5" fill="#0a86b2" stroke="#2a96bc" stroke-width="1"/>
<rect x="318.5" y="612.5" width="9.0" height="9.0" fill="#c20026" stroke="#cc2848" stroke-width="1"/>
<circle cx="323" cy="596" r="4.5" fill="#0000a6" stroke="#1a1aae" stroke-width="1"/>
<rect x="346.5" y="611.5" width="9.0" height="9.0" fill="#c20026" stroke="#cc2848" stroke-width="1"/>
<rect x="366.7" y="591.7" width="8.8" height="5.0" fill="#0000a6" stroke="#1a1aae" stroke-width="1"/>
<rect x="375.5" y="583.5" width="9.0" height="9.0" fill="#c20026" stroke="#cc2848" stroke-width="1"/>
<rect x="380.5" y="589.2" width="9.0" height="9.0" fill="#0a86b2" stroke="#2a96bc" stroke-width="1"/>
<rect x="382.5" y="597.5" width="9.0" height="9.0" fill="#0a44c0" stroke="#2a5cc8" stroke-width="1"/>
<rect x="377.9" y="593.7" width="9.0" height="9.0" fill="#0000a6" stroke="#1a1aae" stroke-width="1"/>
<rect x="376.2" y="591.5" width="9.0" height="9.0" fill="#0a86b2" stroke="#2a96bc" stroke-width="1"/>
<rect x="372.5" y="587.5" width="9.0" height="9.0" fill="#c20026" stroke="#cc2848" stroke-width="1"/>
<circle cx="370.8" cy="601.4" r="4.5" fill="#0000a6" stroke="#1a1aae" stroke-width="1"/>
<rect x="388.5" y="611.5" width="7.2" height="9.0" fill="#0000a6" stroke="#1a1aae" stroke-width="1"/>
<rect x="377.9" y="611.5" width="9.0" height="9.0" fill="#0000a6" stroke="#1a1aae" stroke-width="1"/>
<rect x="377.9" y="603.7" width="9.0" height="9.0" fill="#0a86b2" stroke="#2a96bc" stroke-width="1"/>
<rect x="366.7" y="607.5" width="9.0" height="9.0" fill="#0a86b2" stroke="#2a96bc" stroke-width="1"/>
<rect x="362.5" y="611.5" width="9.0" height="9.0" fill="#0a86b2" stroke="#2a96bc" stroke-width="1"/>
<rect x="366.7" y="623.0" width="9.0" height="9.0" fill="#0000a6" stroke="#1a1aae" stroke-width="1"/>
<rect x="366.5" y="614.5" width="9.0" height="9.0" fill="#0a86b2" stroke="#2a96bc" stroke-width="1"/>
<rect x="377.9" y="622.8" width="9.0" height="9.0" fill="#0a86b2" stroke="#2a96bc" stroke-width="1"/>
<rect x="374.2" y="619.5" width="9.0" height="9.0" fill="#0a86b2" stroke="#2a96bc" stroke-width="1"/>
<rect x="366.7" y="632.5" width="9.0" height="9.0" fill="#c20026" stroke="#cc2848" stroke-width="1"/>
<path d="M95,592 H1138" stroke="#4c3b00" stroke-width="2" stroke-dasharray="4.4,1.6" fill="none"/>
<path d="M475,155 V732" stroke="#4c3b00" stroke-width="2" stroke-dasharray="4.4,1.6" fill="none"/>
<path d="M459,592 H491 M475,576 V608" stroke="#cfcfcf" stroke-width="3.6" fill="none"/>
<circle cx="475.5" cy="592.5" r="5" fill="none" stroke="#a07a00" stroke-width="0.8"/><circle cx="475.5" cy="592.5" r="1.9" fill="#8a6a10"/>
<text x="482.6" y="610.4" font-family="Liberation Sans, sans-serif" font-size="13.9" fill="#ecc22e">Raster</text>

</svg></div>
</div>

<!-- layers.html -->
<div id="dock">
<div class="abs" style="left:0;top:0;width:301px;height:22px;background:linear-gradient(#efefef,#e3e3e3)"></div>
<div class="abs" style="left:0;top:0;width:1px;height:690px;background:#e6e6e6"></div>
<svg class="abs" style="left:0;top:0" width="301" height="49" viewBox="1154 108 301 49">
<defs>
<linearGradient id="gBtn" x1="0" y1="0" x2="0" y2="1"><stop offset="0" stop-color="#f3f3f3"/><stop offset="0.16" stop-color="#e7e7e7"/><stop offset="0.5" stop-color="#ededed"/><stop offset="1" stop-color="#f6f6f6"/></linearGradient>
<g id="eye">
<path d="M-7.6,0.2 Q-6,-3 -3.4,-4.6 Q0,-6.2 3.6,-4.6 Q6.2,-3 7.6,0.4 Q6,3.4 3.2,4.8 Q0,6 -3.4,4.8 Q-6.2,3.2 -7.6,0.2 Z" fill="#000"/>
<ellipse cx="0" cy="0.7" rx="4.2" ry="3.3" fill="#fff"/>
<path d="M-4.4,-0.6 Q0,-4.6 4.4,-0.6 Z" fill="#000"/>
<circle cx="0" cy="-0.5" r="2.5" fill="#000"/>
<circle cx="-0.9" cy="-1.5" r="0.7" fill="#ddd"/>
</g>
<g id="eyeg">
<path d="M-7.6,0.2 Q-6,-3 -3.4,-4.6 Q0,-6.2 3.6,-4.6 Q6.2,-3 7.6,0.4 Q6,3.4 3.2,4.8 Q0,6 -3.4,4.8 Q-6.2,3.2 -7.6,0.2 Z" fill="#a2a2a2"/>
<ellipse cx="0" cy="0.7" rx="4.2" ry="3.3" fill="#f2f2f2"/>
<path d="M-4.4,-0.6 Q0,-4.6 4.4,-0.6 Z" fill="#a2a2a2"/>
<circle cx="0" cy="-0.5" r="2.5" fill="#a2a2a2"/>
<circle cx="-0.9" cy="-1.5" r="0.7" fill="#ddd"/>
</g>
<g id="pencil2">
<g transform="rotate(-42)">
<path d="M-9.6,0 L-6,-1.9 H8.6 Q9.8,-1.9 9.8,-0.7 V0.7 Q9.8,1.9 8.6,1.9 H-6 Z" fill="#e8a33a" stroke="#9a6a20" stroke-width="0.6" stroke-linejoin="round"/>
<path d="M-6,-0.9 H7 V0.3 H-6 Z" fill="#f6c868"/>
<path d="M-9.6,0 L-6,-1.9 V1.9 Z" fill="#f0d6b0" stroke="#9a6a20" stroke-width="0.4"/>
<path d="M-9.6,0 L-8.2,-0.8 V0.8 Z" fill="#333"/>
<path d="M6.6,-1.9 H8.6 Q9.8,-1.9 9.8,-0.7 V0.7 Q9.8,1.9 8.6,1.9 H6.6 Z" fill="#e23a3a"/>
</g>
</g>
</defs>
<!-- close & float -->
<circle cx="1164" cy="118.2" r="6.9" fill="#6f6f6f"/>
<path d="M1160.9,115.1 L1167.1,121.3 M1167.1,115.1 L1160.9,121.3" stroke="#f0f0f0" stroke-width="1.8" stroke-linecap="round"/>
<circle cx="1182" cy="118.2" r="6.9" fill="#6f6f6f"/>
<rect x="1180.4" y="114.8" width="5.2" height="4.4" fill="none" stroke="#f0f0f0" stroke-width="1.1"/>
<rect x="1178.4" y="117.2" width="5.2" height="4.4" fill="#6f6f6f" stroke="#f0f0f0" stroke-width="1.1"/>
<text x="1322.4" y="123.2" text-anchor="middle" font-family="Liberation Sans, sans-serif" font-size="11.8" fill="#111">Lagenlijst</text>
<!-- buttons -->
<g fill="url(#gBtn)" stroke="#a4a4a4" stroke-width="1.2">
<rect x="1156" y="130.8" width="59.5" height="24.6"/><rect x="1215.5" y="130.8" width="59.5" height="24.6"/><rect x="1275" y="130.8" width="60" height="24.6"/><rect x="1335" y="130.8" width="60" height="24.6"/><rect x="1395" y="130.8" width="59.5" height="24.6"/>
</g>
<use href="#eye" x="1185" y="142.9"/>
<use href="#eyeg" x="1244.5" y="142.9"/>
<path d="M1298.7,142.9 H1310.7 M1304.7,136.9 V148.9" stroke="#8a0000" stroke-width="3.4"/>
<path d="M1299.2,142.9 H1310.2 M1304.7,137.4 V148.4" stroke="#f01010" stroke-width="2.4"/>
<path d="M1358.7,142.9 H1370.7" stroke="#8a0000" stroke-width="3.4"/>
<path d="M1359.2,142.9 H1370.2" stroke="#f01010" stroke-width="2.4"/>
<use href="#pencil2" x="1425.3" y="142.6"/>
</svg>
<div class="abs" style="left:2px;top:48px;width:299px;height:642px;background:#fff"></div>
<svg class="abs" style="left:0;top:48px" width="301" height="90" viewBox="1154 156 301 90" font-family="Liberation Sans, sans-serif" font-size="13.5" fill="#111">
<g stroke="#000" stroke-width="1">
<rect x="1161.5" y="163.5" width="15" height="8" fill="#fff"/>
<rect x="1161.5" y="183.5" width="15" height="8" fill="#ff0000"/>
<rect x="1161.5" y="203.5" width="15" height="8" fill="#000"/>
<rect x="1161.5" y="223.5" width="15" height="8" fill="#000"/>
</g>
<g stroke="#111" stroke-width="0.2"><text x="1183.2" y="172">0</text>
<text x="1183.2" y="192">Centrum</text>
<text x="1183.2" y="212">Dun</text>
<text x="1183.2" y="232">Zichtbaar</text></g>
<g id="rowicons">
<use href="#eye" x="1422.5" y="167.4"/>
<path d="M1441.7,166.2 V163.8 Q1441.7,160.9 1444.8,160.9 Q1447.9,160.9 1447.9,163.8 V166.2" fill="none" stroke="#b2b2b2" stroke-width="1.5"/>
<rect x="1440" y="166" width="9.8" height="7.8" rx="0.8" fill="#b2b2b2"/>
</g>
<use href="#rowicons" y="20"/>
<use href="#rowicons" y="40"/>
<use href="#rowicons" y="60"/>
<g transform="translate(1401.5,227.3) scale(0.82)"><use href="#pencil2"/></g>
</svg>
</div>

<!-- righttools.html -->
<div id="right">
<div class="abs" style="left:43px;top:0;width:2px;height:690px;background:#b4b4b4"></div>
<div class="hdots" style="left:8px;top:8px;width:26px"></div>
<div class="pressed" style="left:1px;top:13px;width:42px;height:41px;background:#bcbcbc"></div>
<div class="pressed" style="left:1px;top:309px;width:42px;height:43px;background:#bcbcbc"></div>
<div class="hsep" style="left:3px;top:153px;width:40px"></div>
<div class="hsep" style="left:3px;top:301px;width:40px"></div>
<svg class="abs" style="left:0;top:0" width="45" height="400" viewBox="1455 108 45 400">
<defs>
<g id="win"><rect x="0.5" y="0.5" width="26.4" height="26.4" fill="#fff" stroke="#222" stroke-width="1"/><rect x="0" y="0" width="27.4" height="4.6" fill="#000"/><rect x="1" y="1" width="3" height="3" fill="#fff"/></g>
</defs>
<!-- 1 layers -->
<use href="#win" x="1463.5" y="127"/>
<g transform="translate(1476.8,144)">
<path d="M-7,-2 L-3,-5 V5 L-7,8 Z" fill="#666" stroke="#444" stroke-width="0.5"/>
<path d="M-4.6,-3.6 L-0.6,-6.4 V3.6 L-4.6,6.4 Z" fill="#888" stroke="#555" stroke-width="0.5"/>
<path d="M-2,-4.8 L6.4,-7.4 V2.6 L-2,5.2 Z" fill="#f4f4f4" stroke="#888" stroke-width="0.6"/>
<path d="M0.6,3 L4.6,-4 V1.8 Z" fill="none" stroke="#f04040" stroke-width="0.8"/>
</g>
<!-- 2 blocks -->
<use href="#win" x="1463.5" y="174"/>
<rect x="1470.5" y="184.6" width="10" height="8" fill="#f5e6b0" stroke="#8a7a50" stroke-width="0.8"/>
<circle cx="1479.4" cy="191.4" r="4.2" fill="#f5e6b0" fill-opacity="0.85" stroke="#8a7a50" stroke-width="0.8"/>
<!-- 3 view -->
<use href="#win" x="1463.5" y="221"/>
<rect x="1468.6" y="230.4" width="16.6" height="11.4" rx="2" fill="#f4f5f8" stroke="#c6cfe2" stroke-width="1"/>
<!-- 4 property editor -->
<use href="#win" x="1463.5" y="276.5"/>
<g fill="#000"><rect x="1466.6" y="284.4" width="4" height="2.6"/><rect x="1466.6" y="290.3" width="4" height="2.6"/><rect x="1466.6" y="296.2" width="4" height="2.6"/></g>
<g fill="#fff" stroke="#333" stroke-width="0.7"><rect x="1473.4" y="284.3" width="13.6" height="2.7"/><rect x="1473.4" y="290.2" width="13.6" height="2.7"/><rect x="1473.4" y="296.1" width="13.6" height="2.7"/></g>
<!-- 5 filter -->
<use href="#win" x="1463.5" y="322.5"/>
<path d="M1469.2,331.6 H1485.2 Q1484.6,334.6 1479.4,337.4 V344.4 L1476,342.6 V337.4 Q1470,334.6 1469.2,331.6 Z" fill="#9a9a9a" stroke="#6a6a6a" stroke-width="0.6"/>
<ellipse cx="1477.2" cy="331.8" rx="8" ry="1.4" fill="#c8c8c8" stroke="#777" stroke-width="0.5"/>
<!-- 6 library -->
<use href="#win" x="1463.5" y="368.5"/>
<path d="M1468.4,376.6 L1473.4,379.6 V388.4 L1468.4,391.4 Z" fill="#fff" stroke="#444" stroke-width="0.8"/>
<rect x="1473.4" y="379.2" width="11.6" height="9.6" rx="2" fill="#8a8a8a" stroke="#555" stroke-width="0.6"/>
<rect x="1476" y="381" width="8" height="1.6" fill="#b8b8b8"/>
<path d="M1466.8,384 H1488" stroke="#ff9090" stroke-width="0.9" stroke-dasharray="3,1,1,1"/>
<!-- 7 command line -->
<use href="#win" x="1463.5" y="424"/>
<g fill="#555"><rect x="1465.8" y="431.2" width="13" height="1.1"/><rect x="1465.8" y="434.4" width="11.4" height="1.1"/><rect x="1465.8" y="437.6" width="14.6" height="1.1"/><rect x="1465.8" y="440.8" width="13.6" height="1.1"/></g>
<rect x="1464" y="445.6" width="26.4" height="0.8" fill="#333"/>
<rect x="1471.6" y="447.8" width="15.8" height="1.4" fill="#444"/><rect x="1466" y="447.6" width="2.2" height="1.6" fill="#666"/>
<!-- 8 clipboard -->
<use href="#win" x="1463.5" y="471.5"/>
<rect x="1470.6" y="478.8" width="13.6" height="16" rx="0.8" fill="#c98a22" stroke="#a9700f" stroke-width="0.6"/>
<rect x="1472.2" y="480.6" width="10.4" height="12.6" fill="#f4f4f4"/>
<path d="M1482.6,490 V493.2 H1479.4 Z" fill="#999"/>
<rect x="1474.6" y="477.6" width="5.6" height="3.4" rx="0.8" fill="#a7a89c" stroke="#7d7e74" stroke-width="0.5"/>
<g fill="#c4c4c4"><rect x="1473.6" y="483.4" width="7.6" height="0.8"/><rect x="1473.6" y="485.6" width="7.6" height="0.8"/><rect x="1473.6" y="487.8" width="6" height="0.8"/></g>
</svg>
</div>

<!-- bottom.html -->
<div class="abs" style="left:72px;top:748px;width:1082px;height:50px;background:#ececec"></div>
<div class="abs" style="left:72px;top:748px;width:1082px;height:1px;background:#d4d4d4"></div>
<div class="abs" style="left:72px;top:749px;width:1082px;height:22px;background:#fff;border:1px solid #c3c3c3;border-left:none"></div>
<span class="abs" style="left:77.3px;top:750.3px;font-size:12.8px;letter-spacing:0.42px;line-height:15px;color:#0000d0;white-space:nowrap;-webkit-text-stroke:0.15px #0000d0"><i>Opdracht:</i> move</span>
<span class="abs" style="left:73.4px;top:778.3px;font-size:12.8px;letter-spacing:0.46px;line-height:15px;color:#111;white-space:nowrap;-webkit-text-stroke:0.2px #111">Bestemmingspunt:</span>
<div class="abs" style="left:189px;top:776px;width:938px;height:18px;background:#fff"></div>
<div class="abs" style="left:1127px;top:772px;width:26px;height:25px;border:1px solid #b4b4b4;background:linear-gradient(#fdfdfd,#e6e6e6)"></div>
<svg class="abs" style="left:1132px;top:779px" width="16" height="12" viewBox="0 0 16 12"><rect x="1.5" y="1.5" width="13" height="9" fill="#f1f1f1" stroke="#555" stroke-width="1"/><rect x="1" y="1" width="14" height="3" fill="#000"/><rect x="11" y="1.8" width="1.2" height="1" fill="#888"/></svg>
<div id="status">
<span style="left:2px;top:9px">70,10</span>
<span style="left:2px;top:29px">@50,0</span>
<div class="abs" style="left:253px;top:4px;width:1px;height:39px;background:#9a9a9a"></div>
<span style="left:256px;top:9px;letter-spacing:0.3px">70.7107&lt;8&deg;</span>
<span style="left:256px;top:29px;letter-spacing:0.3px">@50&lt;0&deg;</span>
<div class="abs" style="left:506.5px;top:21px;width:5px;height:5px;border-radius:3px;background:#c6c6c6"></div>
<span style="left:617.5px;top:19px;letter-spacing:0.25px">Bestemmingspunt</span>
<svg class="abs" style="left:716px;top:6px" width="22" height="34" viewBox="716 804 22 34"><rect x="717.6" y="806" width="17" height="29.2" rx="7.6" ry="8" fill="#fff" stroke="#333" stroke-width="1"/><path d="M717.8,818.4 H734.4" stroke="#555" stroke-width="0.8"/><path d="M726.1,806.2 V818.4" stroke="#555" stroke-width="0.8"/><rect x="724.6" y="808.4" width="3" height="6.2" rx="1.5" fill="#fff" stroke="#333" stroke-width="0.8"/></svg>
<span style="left:754px;top:19px;letter-spacing:0.25px">Terug</span>
<div class="abs" style="left:941px;top:21px;width:5px;height:5px;border-radius:3px;background:#c6c6c6"></div>
<span style="left:949px;top:13px;letter-spacing:0.3px">Geselecteerde objecten:</span>
<span style="left:949px;top:24px;letter-spacing:0.3px">26 objecten op 3 laagen.</span>
<div class="abs" style="left:1269.5px;top:21px;width:5px;height:5px;border-radius:3px;background:#c6c6c6"></div>
</div>

</div>
</body></html>
